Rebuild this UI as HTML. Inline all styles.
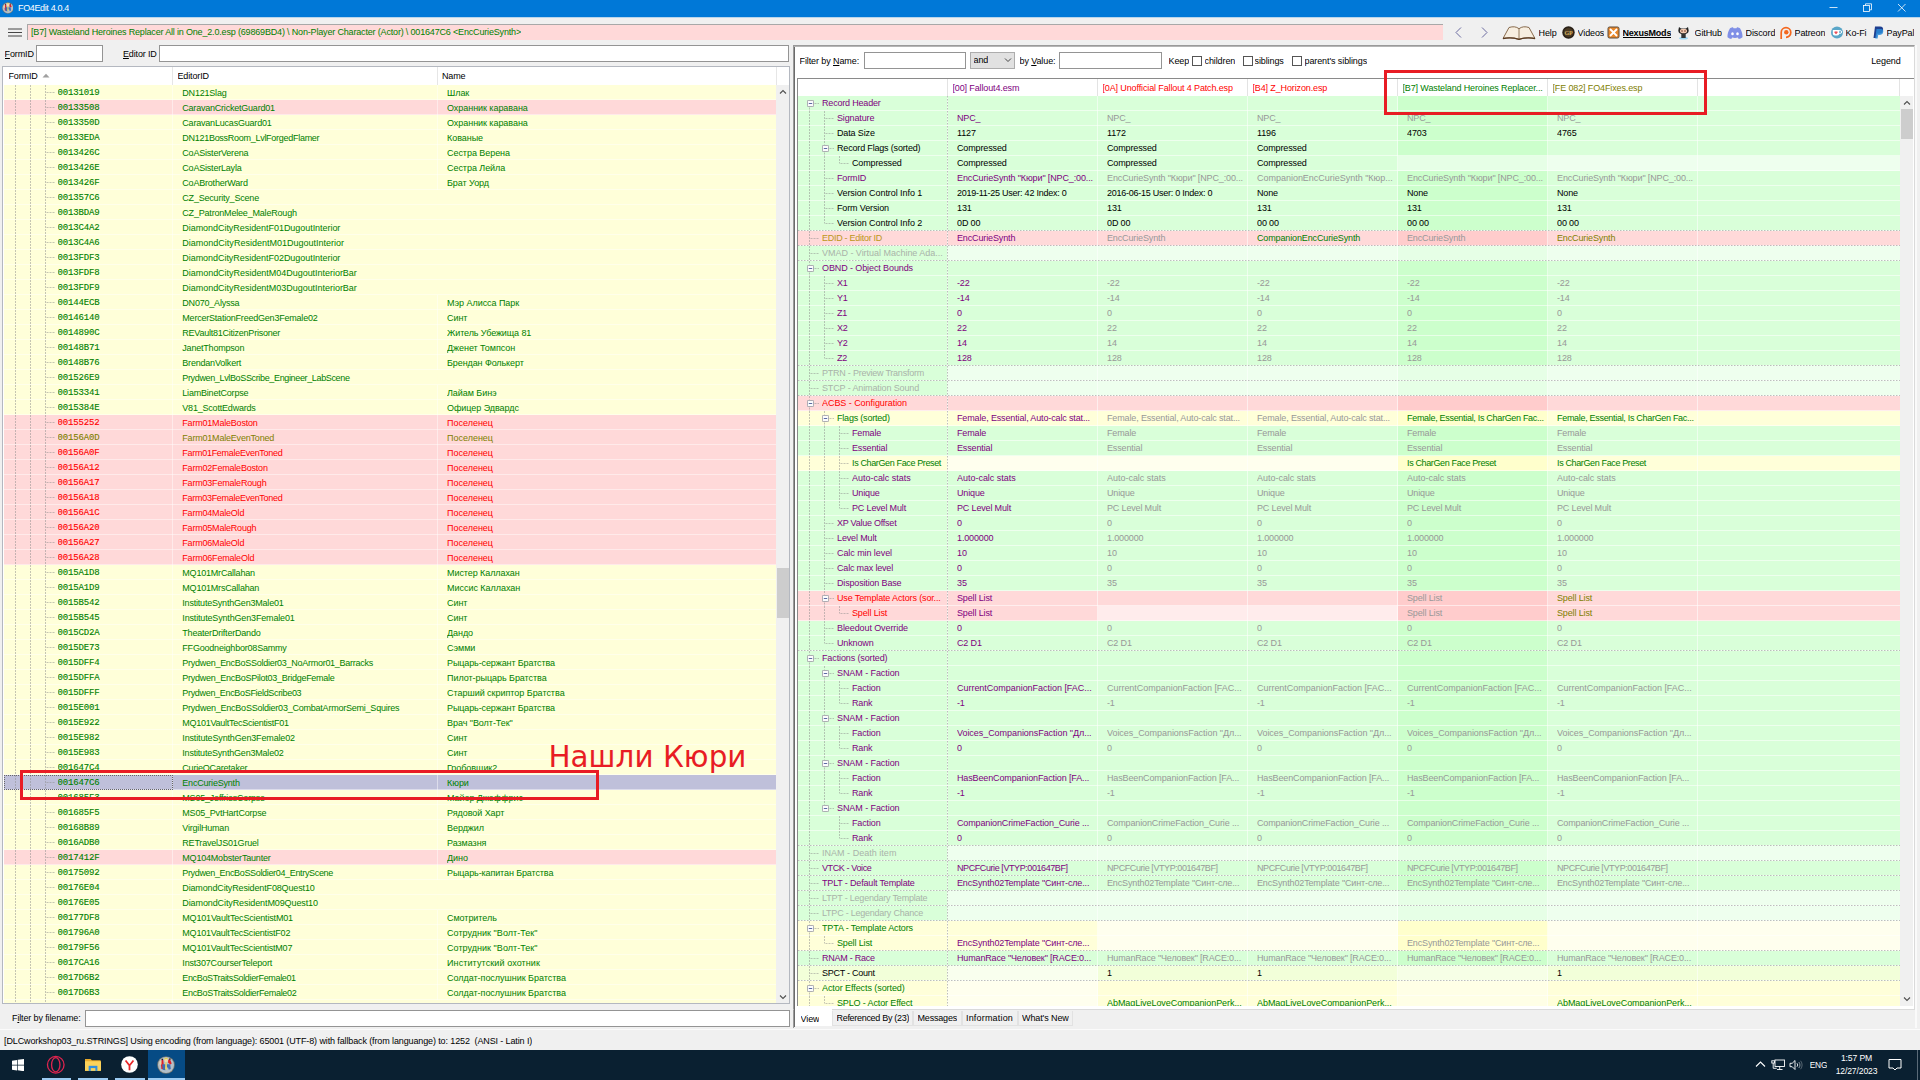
<!DOCTYPE html><html lang="ru"><head><meta charset="utf-8"><title>FO4Edit 4.0.4</title><style>
*{box-sizing:border-box}
html,body{margin:0;padding:0}
body{width:1920px;height:1080px;overflow:hidden;background:#f0f0f0;position:relative;
 font-family:"Liberation Sans",sans-serif;font-size:9px;letter-spacing:-0.13px;color:#000;line-height:15px;-webkit-font-smoothing:antialiased}
.a{position:absolute}
.t{position:absolute;white-space:nowrap;overflow:hidden;height:15px;line-height:15px}
.m{font-family:"Liberation Mono",monospace;font-size:9px;letter-spacing:-0.15px;-webkit-text-stroke:0.12px currentColor}
.inp{position:absolute;background:#fff;border:1px solid #949494}
.g{color:#008000}.r{color:#ff0000}.o{color:#808000}.p{color:#800080}.k{color:#000}.y{color:#989898}.e{color:#bb9618}.q{color:#a9b3a9}
u{text-decoration-thickness:.7px;text-underline-offset:1.2px}
.row{position:absolute;left:0;height:15px}
.c{position:absolute;top:0;height:15px}
.hl{position:absolute;height:1px;left:0}
</style></head><body>
<div class="a" style="left:0;top:0;width:1920px;height:17px;background:#0078d7"></div>
<div class="a" style="left:0;top:17px;width:1920px;height:1px;background:#b9d5ec"></div>
<svg class="a" style="left:1.500px;top:2px" width="11.800" height="11.800" viewBox="0 0 18 18"><circle cx="9" cy="9" r="8.800" fill="#77766c"/><circle cx="9" cy="9" r="8" fill="#b3bfc9"/><path d="M4.600 3.600l1.600.2.500 4.200-.3 5.200-2-.2-.4-4z" fill="#e01f26"/><path d="M11.300 3.800l1.700-.6 1.700 4.200-1.400 1-2.300-1.800z" fill="#e01f26"/><path d="M4.300 3.300l1-.9.900 1-.8.800zM12 2.900l1-.8.800 1.100-1 .7z" fill="#1c1c1c"/><path d="M2.500 6.200c.5-1.400 1.200-2 1.800-1.700l.2 3.800-1.500.8c-.6-.8-.8-1.800-.5-2.900z" fill="#ecd3a4"/><path d="M5.200 8.200h8l.6 4.800-2 .8-.8-2.200H8.600l-.3 2.600-2.600-.4z" fill="#3f6db3"/><path d="M7.400 2.400c1-.9 2.500-.9 3.300 0l.3 2.600-.9 1.300H8.300l-.9-1.300z" fill="#f2dcae"/><path d="M7.200 2.900c.6-1.300 2.800-1.600 3.800-.2l-.6.700c-.9-.6-1.900-.5-2.700.1z" fill="#e6cf4a"/><path d="M8.300 6.200h1.500l.2 6.800-.9.900-1-.9z" fill="#ecd96a"/></svg>
<div class="t" style="left:18px;top:1px;color:#fff;font-size:9px;letter-spacing:-0.36px">FO4Edit 4.0.4</div>
<svg class="a" style="left:1820px;top:0" width="100" height="17" viewBox="0 0 100 17" fill="none" stroke="#fff" stroke-width="0.8"><path d="M9.5 7.5h8"/><rect x="43.5" y="5.5" width="6" height="6"/><path d="M45.5 5.5v-1.7h6v6h-2"/><path d="M78 4l7.5 7.5M85.5 4l-7.5 7.5"/></svg>
<svg class="a" style="left:8px;top:28px" width="14" height="9" viewBox="0 0 14 9"><path d="M0 1h14M0 4.500h14M0 8h14" stroke="#1a1a1a" stroke-width=".8"/></svg>
<div class="a" style="left:27px;top:24px;width:1416px;height:16px;background:#ffd9d9;border-left:1px solid #a8a8a8;border-top:1px solid #a8a8a8"></div>
<div class="t g" style="left:31px;top:24.5px;font-size:9px;letter-spacing:-0.17px">[B7] Wasteland Heroines Replacer All in One_2.0.esp (69869BD4) \ Non-Player Character (Actor) \ 001647C6 &lt;EncCurieSynth&gt;</div>
<svg class="a" style="left:1450px;top:25px" width="45" height="15" viewBox="0 0 45 15" fill="none" stroke="#6a6aa0" stroke-width="1"><path d="M11 2.5l-5 5 5 5"/><path d="M32 2.5l5 5-5 5"/></svg>
<svg class="a" style="left:1502px;top:25px" width="34" height="15" viewBox="0 0 34 15"><path d="M1 13.5L7 2.5c4-1.2 7-1 10 1.2 3-2.2 6-2.4 10-1.2l6 11c-5-1-10-1-16 .8C11 12.500 6 12.500 1 13.500z" fill="#f7eee0" stroke="#7a5a3a" stroke-width="0.9"/><path d="M17 3.700v10.500" stroke="#7a5a3a" stroke-width="0.8"/><path d="M1 13.500c5-1 10-1 16 .8 6-1.800 11-1.800 16-.8" stroke="#5a3a20" stroke-width="1.300" fill="none"/></svg>
<div class="t" style="left:1538.5px;top:26px;font-size:9px;letter-spacing:-0.1px;">Help</div>
<svg class="a" style="left:1562px;top:26px" width="13" height="13" viewBox="0 0 13 13"><circle cx="6.5" cy="6.5" r="6.2" fill="#2a2118"/><circle cx="6.5" cy="6.5" r="4.6" fill="#4a3a24"/><text x="6.5" y="8.800" font-size="6" font-family="Liberation Serif,serif" font-weight="bold" fill="#d8b060" text-anchor="middle">GP</text></svg>
<div class="t" style="left:1577.5px;top:26px;font-size:9px;letter-spacing:-0.1px;">Videos</div>
<svg class="a" style="left:1607px;top:26px" width="13" height="13" viewBox="0 0 13 13"><rect x="1" y="1" width="11" height="11" rx="1.500" fill="#e8872a" stroke="#5a4a3a" stroke-width="1"/><path d="M3 3l7 7M10 3l-7 7" stroke="#fff" stroke-width="1.800"/><circle cx="6.5" cy="6.5" r="1.300" fill="#fff"/></svg>
<div class="t" style="left:1622.5px;top:26px;font-size:9px;letter-spacing:-0.1px;font-weight:bold;text-decoration:underline;letter-spacing:-0.2px">NexusMods</div>
<svg class="a" style="left:1677px;top:25px" width="13" height="15" viewBox="0 0 13 15"><ellipse cx="6.5" cy="13.300" rx="4.500" ry="1.200" fill="#9cd7f5"/><path d="M2 2l2 1.500h5L11 2l.7 3.500c0 2.500-2 3.700-5.200 3.700S1.300 8 1.300 5.500z" fill="#222"/><ellipse cx="6.5" cy="6" rx="3.600" ry="2.300" fill="#f4cbb2"/><rect x="4.300" y="9" width="4.400" height="4" fill="#333"/><circle cx="5" cy="6" r=".8" fill="#6a3a2a"/><circle cx="8" cy="6" r=".8" fill="#6a3a2a"/></svg>
<div class="t" style="left:1694.5px;top:26px;font-size:9px;letter-spacing:-0.1px;">GitHub</div>
<svg class="a" style="left:1727px;top:27px" width="16" height="12" viewBox="0 0 16 12"><path d="M3 1.200C4.500.5 5.500.300 6 .3l.5.900h3L10 .3c.5 0 1.500.200 3 .9 1.800 2.800 2.700 6 2.500 9-1.300 1-2.600 1.500-3.800 1.700l-.8-1.400c-1.800.5-4 .5-5.800 0l-.8 1.400C3.100 11.700 1.800 11.200.5 10.200.300 7.200 1.200 4 3 1.200z" fill="#7f8fe6"/><ellipse cx="5.500" cy="6.800" rx="1.300" ry="1.500" fill="#fff"/><ellipse cx="10.500" cy="6.800" rx="1.300" ry="1.500" fill="#fff"/></svg>
<div class="t" style="left:1745.5px;top:26px;font-size:9px;letter-spacing:-0.1px;">Discord</div>
<svg class="a" style="left:1779px;top:26px" width="14" height="14" viewBox="0 0 14 14"><path d="M2.200 13V6.500a4.800 4.800 0 1 1 4.800 4.800" fill="none" stroke="#f4681f" stroke-width="1.700"/><circle cx="7.300" cy="6.300" r="2.200" fill="#f4681f"/></svg>
<div class="t" style="left:1794.5px;top:26px;font-size:9px;letter-spacing:-0.1px;">Patreon</div>
<svg class="a" style="left:1830px;top:26px" width="14" height="13" viewBox="0 0 14 13"><circle cx="7" cy="6.500" r="6" fill="#5aa6c8"/><path d="M2.800 4h6.400v3.500a2 2 0 0 1-2 2H4.800a2 2 0 0 1-2-2z" fill="#fff"/><path d="M9.200 4.600h1a1.400 1.400 0 0 1 0 2.800h-1" fill="none" stroke="#fff" stroke-width="1"/><path d="M6 8.300L4.500 6.800a.9.900 0 0 1 1.500-1 .9.900 0 0 1 1.500 1z" fill="#e8505a"/></svg>
<div class="t" style="left:1845.5px;top:26px;font-size:9px;letter-spacing:-0.1px;">Ko-Fi</div>
<svg class="a" style="left:1873px;top:26px" width="11" height="13" viewBox="0 0 11 13"><path d="M2 .5h5c2.500 0 3.500 1.500 3 3.800-.5 2.500-2.200 3.500-4.500 3.500H4L3.300 12H.5z" fill="#1f3f8f"/><path d="M3.500 3h4.300c2 0 2.800 1.200 2.400 3-.4 2.200-1.900 3-3.800 3H5.200l-.6 3.500H2.200z" fill="#2a8ad8" opacity=".85"/></svg>
<div class="t" style="left:1886.5px;top:26px;font-size:9px;letter-spacing:-0.1px;">PayPal</div>
<div class="t" style="left:4.5px;top:46.5px;font-size:9px;letter-spacing:-0.1px"><u>F</u>ormID</div>
<div class="inp" style="left:36px;top:45px;width:67px;height:17px"></div>
<div class="t" style="left:123px;top:46.5px;font-size:9px;letter-spacing:-0.15px"><u>E</u>ditor ID</div>
<div class="inp" style="left:159px;top:45px;width:630px;height:17px"></div>
<div class="a" style="left:2px;top:66px;width:788px;height:938px;background:#ffffd9;border:1px solid #b4b8c0;overflow:hidden">
<div class="a" style="left:0;top:0;width:786px;height:18px;background:#fff"></div>
<div class="t" style="left:5.5px;top:2px;font-size:9px">FormID</div>
<svg class="a" style="left:39px;top:6px" width="8" height="5" viewBox="0 0 8 5"><path d="M0.5 4.500L4 .8l3.500 3.700z" fill="#a0a0a0"/></svg>
<div class="t" style="left:174.5px;top:2px;font-size:9px">EditorID</div>
<div class="t" style="left:439px;top:2px;font-size:9px">Name</div>
<div class="a" style="left:169px;top:0;width:1px;height:18px;background:#e6e6e6"></div>
<div class="a" style="left:434px;top:0;width:1px;height:18px;background:#e6e6e6"></div>
<div class="a" style="left:773px;top:0;width:1px;height:18px;background:#e6e6e6"></div>
<div class="row g" style="top:18px;width:773px;background:#ffffd9"><span class="t m" style="left:54.5px;top:1px">00131019</span><span class="t" style="left:179.3px;top:1px;width:254px;letter-spacing:-0.2px">DN121Slag</span><span class="t" style="left:444px;top:1px;width:325px;letter-spacing:-0.05px">Шлак</span></div>
<div class="row g" style="top:33px;width:773px;background:#ffd9d9"><span class="t m" style="left:54.5px;top:1px">00133508</span><span class="t" style="left:179.3px;top:1px;width:254px;letter-spacing:-0.216px">CaravanCricketGuard01</span><span class="t" style="left:444px;top:1px;width:325px;letter-spacing:-0.05px">Охранник каравана</span></div>
<div class="row g" style="top:48px;width:773px;background:#ffffd9"><span class="t m" style="left:54.5px;top:1px">0013350D</span><span class="t" style="left:179.3px;top:1px;width:254px;letter-spacing:-0.2px">CaravanLucasGuard01</span><span class="t" style="left:444px;top:1px;width:325px;letter-spacing:-0.05px">Охранник каравана</span></div>
<div class="row g" style="top:63px;width:773px;background:#ffffd9"><span class="t m" style="left:54.5px;top:1px">00133EDA</span><span class="t" style="left:179.3px;top:1px;width:254px;letter-spacing:-0.278px">DN121BossRoom_LvlForgedFlamer</span><span class="t" style="left:444px;top:1px;width:325px;letter-spacing:-0.05px">Кованые</span></div>
<div class="row g" style="top:78px;width:773px;background:#ffffd9"><span class="t m" style="left:54.5px;top:1px">0013426C</span><span class="t" style="left:179.3px;top:1px;width:254px;letter-spacing:-0.2px">CoASisterVerena</span><span class="t" style="left:444px;top:1px;width:325px;letter-spacing:-0.05px">Сестра Верена</span></div>
<div class="row g" style="top:93px;width:773px;background:#ffffd9"><span class="t m" style="left:54.5px;top:1px">0013426E</span><span class="t" style="left:179.3px;top:1px;width:254px;letter-spacing:-0.2px">CoASisterLayla</span><span class="t" style="left:444px;top:1px;width:325px;letter-spacing:-0.05px">Сестра Лейла</span></div>
<div class="row g" style="top:108px;width:773px;background:#ffffd9"><span class="t m" style="left:54.5px;top:1px">0013426F</span><span class="t" style="left:179.3px;top:1px;width:254px;letter-spacing:-0.2px">CoABrotherWard</span><span class="t" style="left:444px;top:1px;width:325px;letter-spacing:-0.05px">Брат Уорд</span></div>
<div class="row g" style="top:123px;width:773px;background:#ffffd9"><span class="t m" style="left:54.5px;top:1px">001357C6</span><span class="t" style="left:179.3px;top:1px;width:254px;letter-spacing:-0.2px">CZ_Security_Scene</span></div>
<div class="row g" style="top:138px;width:773px;background:#ffffd9"><span class="t m" style="left:54.5px;top:1px">0013BDA9</span><span class="t" style="left:179.3px;top:1px;width:254px;letter-spacing:-0.19px">CZ_PatronMelee_MaleRough</span></div>
<div class="row g" style="top:153px;width:773px;background:#ffffd9"><span class="t m" style="left:54.5px;top:1px">0013C4A2</span><span class="t" style="left:179.3px;top:1px;width:254px;letter-spacing:-0.044px">DiamondCityResidentF01DugoutInterior</span></div>
<div class="row g" style="top:168px;width:773px;background:#ffffd9"><span class="t m" style="left:54.5px;top:1px">0013C4A6</span><span class="t" style="left:179.3px;top:1px;width:254px;letter-spacing:0.006px">DiamondCityResidentM01DugoutInterior</span></div>
<div class="row g" style="top:183px;width:773px;background:#ffffd9"><span class="t m" style="left:54.5px;top:1px">0013FDF3</span><span class="t" style="left:179.3px;top:1px;width:254px;letter-spacing:-0.044px">DiamondCityResidentF02DugoutInterior</span></div>
<div class="row g" style="top:198px;width:773px;background:#ffffd9"><span class="t m" style="left:54.5px;top:1px">0013FDF8</span><span class="t" style="left:179.3px;top:1px;width:254px;letter-spacing:-0.028px">DiamondCityResidentM04DugoutInteriorBar</span></div>
<div class="row g" style="top:213px;width:773px;background:#ffffd9"><span class="t m" style="left:54.5px;top:1px">0013FDF9</span><span class="t" style="left:179.3px;top:1px;width:254px;letter-spacing:-0.028px">DiamondCityResidentM03DugoutInteriorBar</span></div>
<div class="row g" style="top:228px;width:773px;background:#ffffd9"><span class="t m" style="left:54.5px;top:1px">00144ECB</span><span class="t" style="left:179.3px;top:1px;width:254px;letter-spacing:-0.2px">DN070_Alyssa</span><span class="t" style="left:444px;top:1px;width:325px;letter-spacing:-0.05px">Мэр Алисса Парк</span></div>
<div class="row g" style="top:243px;width:773px;background:#ffffd9"><span class="t m" style="left:54.5px;top:1px">00146140</span><span class="t" style="left:179.3px;top:1px;width:254px;letter-spacing:-0.212px">MercerStationFreedGen3Female02</span><span class="t" style="left:444px;top:1px;width:325px;letter-spacing:-0.05px">Синт</span></div>
<div class="row g" style="top:258px;width:773px;background:#ffffd9"><span class="t m" style="left:54.5px;top:1px">0014890C</span><span class="t" style="left:179.3px;top:1px;width:254px;letter-spacing:-0.237px">REVault81CitizenPrisoner</span><span class="t" style="left:444px;top:1px;width:325px;letter-spacing:-0.103px">Житель Убежища 81</span></div>
<div class="row g" style="top:273px;width:773px;background:#ffffd9"><span class="t m" style="left:54.5px;top:1px">00148B71</span><span class="t" style="left:179.3px;top:1px;width:254px;letter-spacing:-0.2px">JanetThompson</span><span class="t" style="left:444px;top:1px;width:325px;letter-spacing:-0.05px">Дженет Томпсон</span></div>
<div class="row g" style="top:288px;width:773px;background:#ffffd9"><span class="t m" style="left:54.5px;top:1px">00148B76</span><span class="t" style="left:179.3px;top:1px;width:254px;letter-spacing:-0.2px">BrendanVolkert</span><span class="t" style="left:444px;top:1px;width:325px;letter-spacing:-0.092px">Брендан Фолькерт</span></div>
<div class="row g" style="top:303px;width:773px;background:#ffffd9"><span class="t m" style="left:54.5px;top:1px">001526E9</span><span class="t" style="left:179.3px;top:1px;width:254px;letter-spacing:-0.351px">Prydwen_LvlBoSScribe_Engineer_LabScene</span></div>
<div class="row g" style="top:318px;width:773px;background:#ffffd9"><span class="t m" style="left:54.5px;top:1px">00153341</span><span class="t" style="left:179.3px;top:1px;width:254px;letter-spacing:-0.2px">LiamBinetCorpse</span><span class="t" style="left:444px;top:1px;width:325px;letter-spacing:-0.05px">Лайам Бинэ</span></div>
<div class="row g" style="top:333px;width:773px;background:#ffffd9"><span class="t m" style="left:54.5px;top:1px">0015384E</span><span class="t" style="left:179.3px;top:1px;width:254px;letter-spacing:-0.2px">V81_ScottEdwards</span><span class="t" style="left:444px;top:1px;width:325px;letter-spacing:-0.05px">Офицер Эдвардс</span></div>
<div class="row r" style="top:348px;width:773px;background:#ffd9d9"><span class="t m" style="left:54.5px;top:1px">00155252</span><span class="t" style="left:179.3px;top:1px;width:254px;letter-spacing:-0.2px">Farm01MaleBoston</span><span class="t" style="left:444px;top:1px;width:325px;letter-spacing:-0.008px">Поселенец</span></div>
<div class="row o" style="top:363px;width:773px;background:#ffd9d9"><span class="t m" style="left:54.5px;top:1px">00156A0D</span><span class="t" style="left:179.3px;top:1px;width:254px;letter-spacing:-0.2px">Farm01MaleEvenToned</span><span class="t" style="left:444px;top:1px;width:325px;letter-spacing:-0.008px">Поселенец</span></div>
<div class="row r" style="top:378px;width:773px;background:#ffd9d9"><span class="t m" style="left:54.5px;top:1px">00156A0F</span><span class="t" style="left:179.3px;top:1px;width:254px;letter-spacing:-0.279px">Farm01FemaleEvenToned</span><span class="t" style="left:444px;top:1px;width:325px;letter-spacing:-0.008px">Поселенец</span></div>
<div class="row r" style="top:393px;width:773px;background:#ffd9d9"><span class="t m" style="left:54.5px;top:1px">00156A12</span><span class="t" style="left:179.3px;top:1px;width:254px;letter-spacing:-0.2px">Farm02FemaleBoston</span><span class="t" style="left:444px;top:1px;width:325px;letter-spacing:-0.008px">Поселенец</span></div>
<div class="row r" style="top:408px;width:773px;background:#ffd9d9"><span class="t m" style="left:54.5px;top:1px">00156A17</span><span class="t" style="left:179.3px;top:1px;width:254px;letter-spacing:-0.2px">Farm03FemaleRough</span><span class="t" style="left:444px;top:1px;width:325px;letter-spacing:-0.008px">Поселенец</span></div>
<div class="row r" style="top:423px;width:773px;background:#ffd9d9"><span class="t m" style="left:54.5px;top:1px">00156A18</span><span class="t" style="left:179.3px;top:1px;width:254px;letter-spacing:-0.279px">Farm03FemaleEvenToned</span><span class="t" style="left:444px;top:1px;width:325px;letter-spacing:-0.008px">Поселенец</span></div>
<div class="row r" style="top:438px;width:773px;background:#ffd9d9"><span class="t m" style="left:54.5px;top:1px">00156A1C</span><span class="t" style="left:179.3px;top:1px;width:254px;letter-spacing:-0.2px">Farm04MaleOld</span><span class="t" style="left:444px;top:1px;width:325px;letter-spacing:-0.008px">Поселенец</span></div>
<div class="row r" style="top:453px;width:773px;background:#ffd9d9"><span class="t m" style="left:54.5px;top:1px">00156A20</span><span class="t" style="left:179.3px;top:1px;width:254px;letter-spacing:-0.2px">Farm05MaleRough</span><span class="t" style="left:444px;top:1px;width:325px;letter-spacing:-0.008px">Поселенец</span></div>
<div class="row r" style="top:468px;width:773px;background:#ffd9d9"><span class="t m" style="left:54.5px;top:1px">00156A27</span><span class="t" style="left:179.3px;top:1px;width:254px;letter-spacing:-0.2px">Farm06MaleOld</span><span class="t" style="left:444px;top:1px;width:325px;letter-spacing:-0.008px">Поселенец</span></div>
<div class="row r" style="top:483px;width:773px;background:#ffd9d9"><span class="t m" style="left:54.5px;top:1px">00156A28</span><span class="t" style="left:179.3px;top:1px;width:254px;letter-spacing:-0.2px">Farm06FemaleOld</span><span class="t" style="left:444px;top:1px;width:325px;letter-spacing:-0.008px">Поселенец</span></div>
<div class="row g" style="top:498px;width:773px;background:#ffffd9"><span class="t m" style="left:54.5px;top:1px">0015A1D8</span><span class="t" style="left:179.3px;top:1px;width:254px;letter-spacing:-0.2px">MQ101MrCallahan</span><span class="t" style="left:444px;top:1px;width:325px;letter-spacing:-0.073px">Мистер Каллахан</span></div>
<div class="row g" style="top:513px;width:773px;background:#ffffd9"><span class="t m" style="left:54.5px;top:1px">0015A1D9</span><span class="t" style="left:179.3px;top:1px;width:254px;letter-spacing:-0.2px">MQ101MrsCallahan</span><span class="t" style="left:444px;top:1px;width:325px;letter-spacing:-0.026px">Миссис Каллахан</span></div>
<div class="row g" style="top:528px;width:773px;background:#ffffd9"><span class="t m" style="left:54.5px;top:1px">0015B542</span><span class="t" style="left:179.3px;top:1px;width:254px;letter-spacing:-0.2px">InstituteSynthGen3Male01</span><span class="t" style="left:444px;top:1px;width:325px;letter-spacing:-0.05px">Синт</span></div>
<div class="row g" style="top:543px;width:773px;background:#ffffd9"><span class="t m" style="left:54.5px;top:1px">0015B545</span><span class="t" style="left:179.3px;top:1px;width:254px;letter-spacing:-0.164px">InstituteSynthGen3Female01</span><span class="t" style="left:444px;top:1px;width:325px;letter-spacing:-0.05px">Синт</span></div>
<div class="row g" style="top:558px;width:773px;background:#ffffd9"><span class="t m" style="left:54.5px;top:1px">0015CD2A</span><span class="t" style="left:179.3px;top:1px;width:254px;letter-spacing:-0.2px">TheaterDrifterDando</span><span class="t" style="left:444px;top:1px;width:325px;letter-spacing:-0.05px">Дандо</span></div>
<div class="row g" style="top:573px;width:773px;background:#ffffd9"><span class="t m" style="left:54.5px;top:1px">0015DE73</span><span class="t" style="left:179.3px;top:1px;width:254px;letter-spacing:-0.2px">FFGoodneighbor08Sammy</span><span class="t" style="left:444px;top:1px;width:325px;letter-spacing:-0.05px">Сэмми</span></div>
<div class="row g" style="top:588px;width:773px;background:#ffffd9"><span class="t m" style="left:54.5px;top:1px">0015DFF4</span><span class="t" style="left:179.3px;top:1px;width:254px;letter-spacing:-0.274px">Prydwen_EncBoSSoldier03_NoArmor01_Barracks</span><span class="t" style="left:444px;top:1px;width:325px;letter-spacing:-0.109px">Рыцарь-сержант Братства</span></div>
<div class="row g" style="top:603px;width:773px;background:#ffffd9"><span class="t m" style="left:54.5px;top:1px">0015DFFA</span><span class="t" style="left:179.3px;top:1px;width:254px;letter-spacing:-0.259px">Prydwen_EncBoSPilot03_BridgeFemale</span><span class="t" style="left:444px;top:1px;width:325px;letter-spacing:-0.045px">Пилот-рыцарь Братства</span></div>
<div class="row g" style="top:618px;width:773px;background:#ffffd9"><span class="t m" style="left:54.5px;top:1px">0015DFFF</span><span class="t" style="left:179.3px;top:1px;width:254px;letter-spacing:-0.317px">Prydwen_EncBoSFieldScribe03</span><span class="t" style="left:444px;top:1px;width:325px;letter-spacing:-0.025px">Старший скриптор Братства</span></div>
<div class="row g" style="top:633px;width:773px;background:#ffffd9"><span class="t m" style="left:54.5px;top:1px">0015E001</span><span class="t" style="left:179.3px;top:1px;width:254px;letter-spacing:-0.226px">Prydwen_EncBoSSoldier03_CombatArmorSemi_Squires</span><span class="t" style="left:444px;top:1px;width:325px;letter-spacing:-0.109px">Рыцарь-сержант Братства</span></div>
<div class="row g" style="top:648px;width:773px;background:#ffffd9"><span class="t m" style="left:54.5px;top:1px">0015E922</span><span class="t" style="left:179.3px;top:1px;width:254px;letter-spacing:-0.256px">MQ101VaultTecScientistF01</span><span class="t" style="left:444px;top:1px;width:325px;letter-spacing:-0.05px">Врач "Волт-Тек"</span></div>
<div class="row g" style="top:663px;width:773px;background:#ffffd9"><span class="t m" style="left:54.5px;top:1px">0015E982</span><span class="t" style="left:179.3px;top:1px;width:254px;letter-spacing:-0.153px">InstituteSynthGen3Female02</span><span class="t" style="left:444px;top:1px;width:325px;letter-spacing:-0.05px">Синт</span></div>
<div class="row g" style="top:678px;width:773px;background:#ffffd9"><span class="t m" style="left:54.5px;top:1px">0015E983</span><span class="t" style="left:179.3px;top:1px;width:254px;letter-spacing:-0.2px">InstituteSynthGen3Male02</span><span class="t" style="left:444px;top:1px;width:325px;letter-spacing:-0.05px">Синт</span></div>
<div class="row g" style="top:693px;width:773px;background:#ffffd9"><span class="t m" style="left:54.5px;top:1px">001647C4</span><span class="t" style="left:179.3px;top:1px;width:254px;letter-spacing:-0.2px">CurieQCaretaker</span><span class="t" style="left:444px;top:1px;width:325px;letter-spacing:-0.05px">Гробовщик2</span></div>
<div class="row g" style="top:708px;width:773px;background:#bfc0da"><span class="t m" style="left:54.5px;top:1px">001647C6</span><span class="t" style="left:179.3px;top:1px;width:254px;letter-spacing:-0.2px">EncCurieSynth</span><span class="t" style="left:444px;top:1px;width:325px;letter-spacing:-0.05px">Кюри</span></div>
<div class="row g" style="top:723px;width:773px;background:#ffffd9"><span class="t m" style="left:54.5px;top:1px">001685F3</span><span class="t" style="left:179.3px;top:1px;width:254px;letter-spacing:-0.2px">MS05_JeffriesCorpse</span><span class="t" style="left:444px;top:1px;width:325px;letter-spacing:-0.05px">Майор Джеффрис</span></div>
<div class="row g" style="top:738px;width:773px;background:#ffffd9"><span class="t m" style="left:54.5px;top:1px">001685F5</span><span class="t" style="left:179.3px;top:1px;width:254px;letter-spacing:-0.2px">MS05_PvtHartCorpse</span><span class="t" style="left:444px;top:1px;width:325px;letter-spacing:-0.05px">Рядовой Харт</span></div>
<div class="row g" style="top:753px;width:773px;background:#ffffd9"><span class="t m" style="left:54.5px;top:1px">00168B89</span><span class="t" style="left:179.3px;top:1px;width:254px;letter-spacing:-0.2px">VirgilHuman</span><span class="t" style="left:444px;top:1px;width:325px;letter-spacing:-0.05px">Верджил</span></div>
<div class="row g" style="top:768px;width:773px;background:#ffffd9"><span class="t m" style="left:54.5px;top:1px">0016ADB0</span><span class="t" style="left:179.3px;top:1px;width:254px;letter-spacing:-0.2px">RETravelJS01Gruel</span><span class="t" style="left:444px;top:1px;width:325px;letter-spacing:-0.05px">Размазня</span></div>
<div class="row g" style="top:783px;width:773px;background:#ffd9d9"><span class="t m" style="left:54.5px;top:1px">0017412F</span><span class="t" style="left:179.3px;top:1px;width:254px;letter-spacing:-0.2px">MQ104MobsterTaunter</span><span class="t" style="left:444px;top:1px;width:325px;letter-spacing:-0.05px">Дино</span></div>
<div class="row g" style="top:798px;width:773px;background:#ffffd9"><span class="t m" style="left:54.5px;top:1px">00175092</span><span class="t" style="left:179.3px;top:1px;width:254px;letter-spacing:-0.338px">Prydwen_EncBoSSoldier04_EntryScene</span><span class="t" style="left:444px;top:1px;width:325px;letter-spacing:-0.114px">Рыцарь-капитан Братства</span></div>
<div class="row g" style="top:813px;width:773px;background:#ffffd9"><span class="t m" style="left:54.5px;top:1px">00176E04</span><span class="t" style="left:179.3px;top:1px;width:254px;letter-spacing:-0.147px">DiamondCityResidentF08Quest10</span></div>
<div class="row g" style="top:828px;width:773px;background:#ffffd9"><span class="t m" style="left:54.5px;top:1px">00176E05</span><span class="t" style="left:179.3px;top:1px;width:254px;letter-spacing:-0.102px">DiamondCityResidentM09Quest10</span></div>
<div class="row g" style="top:843px;width:773px;background:#ffffd9"><span class="t m" style="left:54.5px;top:1px">00177DF8</span><span class="t" style="left:179.3px;top:1px;width:254px;letter-spacing:-0.172px">MQ101VaultTecScientistM01</span><span class="t" style="left:444px;top:1px;width:325px;letter-spacing:-0.05px">Смотритель</span></div>
<div class="row g" style="top:858px;width:773px;background:#ffffd9"><span class="t m" style="left:54.5px;top:1px">001796A0</span><span class="t" style="left:179.3px;top:1px;width:254px;letter-spacing:-0.2px">MQ101VaultTecScientistF02</span><span class="t" style="left:444px;top:1px;width:325px;letter-spacing:0.039px">Сотрудник "Волт-Тек"</span></div>
<div class="row g" style="top:873px;width:773px;background:#ffffd9"><span class="t m" style="left:54.5px;top:1px">00179F56</span><span class="t" style="left:179.3px;top:1px;width:254px;letter-spacing:-0.2px">MQ101VaultTecScientistM07</span><span class="t" style="left:444px;top:1px;width:325px;letter-spacing:0.039px">Сотрудник "Волт-Тек"</span></div>
<div class="row g" style="top:888px;width:773px;background:#ffffd9"><span class="t m" style="left:54.5px;top:1px">0017CA16</span><span class="t" style="left:179.3px;top:1px;width:254px;letter-spacing:-0.171px">Inst307CourserTeleport</span><span class="t" style="left:444px;top:1px;width:325px;letter-spacing:0.1px">Институтский охотник</span></div>
<div class="row g" style="top:903px;width:773px;background:#ffffd9"><span class="t m" style="left:54.5px;top:1px">0017D6B2</span><span class="t" style="left:179.3px;top:1px;width:254px;letter-spacing:-0.342px">EncBoSTraitsSoldierFemale01</span><span class="t" style="left:444px;top:1px;width:325px;letter-spacing:-0.027px">Солдат-послушник Братства</span></div>
<div class="row g" style="top:918px;width:773px;background:#ffffd9"><span class="t m" style="left:54.5px;top:1px">0017D6B3</span><span class="t" style="left:179.3px;top:1px;width:254px;letter-spacing:-0.319px">EncBoSTraitsSoldierFemale02</span><span class="t" style="left:444px;top:1px;width:325px;letter-spacing:-0.027px">Солдат-послушник Братства</span></div>
<svg class="a" style="left:0;top:18px" width="773" height="918" viewBox="0 0 773 918"><path d="M0 14.5H773" stroke="#fff" stroke-opacity=".45" stroke-width="1"/><path d="M0 29.5H773" stroke="#fff" stroke-opacity=".45" stroke-width="1"/><path d="M0 44.5H773" stroke="#fff" stroke-opacity=".45" stroke-width="1"/><path d="M0 59.5H773" stroke="#fff" stroke-opacity=".45" stroke-width="1"/><path d="M0 74.5H773" stroke="#fff" stroke-opacity=".45" stroke-width="1"/><path d="M0 89.5H773" stroke="#fff" stroke-opacity=".45" stroke-width="1"/><path d="M0 104.5H773" stroke="#fff" stroke-opacity=".45" stroke-width="1"/><path d="M0 119.5H773" stroke="#fff" stroke-opacity=".45" stroke-width="1"/><path d="M0 134.5H773" stroke="#fff" stroke-opacity=".45" stroke-width="1"/><path d="M0 149.5H773" stroke="#fff" stroke-opacity=".45" stroke-width="1"/><path d="M0 164.5H773" stroke="#fff" stroke-opacity=".45" stroke-width="1"/><path d="M0 179.5H773" stroke="#fff" stroke-opacity=".45" stroke-width="1"/><path d="M0 194.5H773" stroke="#fff" stroke-opacity=".45" stroke-width="1"/><path d="M0 209.5H773" stroke="#fff" stroke-opacity=".45" stroke-width="1"/><path d="M0 224.5H773" stroke="#fff" stroke-opacity=".45" stroke-width="1"/><path d="M0 239.5H773" stroke="#fff" stroke-opacity=".45" stroke-width="1"/><path d="M0 254.5H773" stroke="#fff" stroke-opacity=".45" stroke-width="1"/><path d="M0 269.5H773" stroke="#fff" stroke-opacity=".45" stroke-width="1"/><path d="M0 284.5H773" stroke="#fff" stroke-opacity=".45" stroke-width="1"/><path d="M0 299.5H773" stroke="#fff" stroke-opacity=".45" stroke-width="1"/><path d="M0 314.5H773" stroke="#fff" stroke-opacity=".45" stroke-width="1"/><path d="M0 329.5H773" stroke="#fff" stroke-opacity=".45" stroke-width="1"/><path d="M0 344.5H773" stroke="#fff" stroke-opacity=".45" stroke-width="1"/><path d="M0 359.5H773" stroke="#fff" stroke-opacity=".45" stroke-width="1"/><path d="M0 374.5H773" stroke="#fff" stroke-opacity=".45" stroke-width="1"/><path d="M0 389.5H773" stroke="#fff" stroke-opacity=".45" stroke-width="1"/><path d="M0 404.5H773" stroke="#fff" stroke-opacity=".45" stroke-width="1"/><path d="M0 419.5H773" stroke="#fff" stroke-opacity=".45" stroke-width="1"/><path d="M0 434.5H773" stroke="#fff" stroke-opacity=".45" stroke-width="1"/><path d="M0 449.5H773" stroke="#fff" stroke-opacity=".45" stroke-width="1"/><path d="M0 464.5H773" stroke="#fff" stroke-opacity=".45" stroke-width="1"/><path d="M0 479.5H773" stroke="#fff" stroke-opacity=".45" stroke-width="1"/><path d="M0 494.5H773" stroke="#fff" stroke-opacity=".45" stroke-width="1"/><path d="M0 509.5H773" stroke="#fff" stroke-opacity=".45" stroke-width="1"/><path d="M0 524.5H773" stroke="#fff" stroke-opacity=".45" stroke-width="1"/><path d="M0 539.5H773" stroke="#fff" stroke-opacity=".45" stroke-width="1"/><path d="M0 554.5H773" stroke="#fff" stroke-opacity=".45" stroke-width="1"/><path d="M0 569.5H773" stroke="#fff" stroke-opacity=".45" stroke-width="1"/><path d="M0 584.5H773" stroke="#fff" stroke-opacity=".45" stroke-width="1"/><path d="M0 599.5H773" stroke="#fff" stroke-opacity=".45" stroke-width="1"/><path d="M0 614.5H773" stroke="#fff" stroke-opacity=".45" stroke-width="1"/><path d="M0 629.5H773" stroke="#fff" stroke-opacity=".45" stroke-width="1"/><path d="M0 644.5H773" stroke="#fff" stroke-opacity=".45" stroke-width="1"/><path d="M0 659.5H773" stroke="#fff" stroke-opacity=".45" stroke-width="1"/><path d="M0 674.5H773" stroke="#fff" stroke-opacity=".45" stroke-width="1"/><path d="M0 689.5H773" stroke="#fff" stroke-opacity=".45" stroke-width="1"/><path d="M0 704.5H773" stroke="#fff" stroke-opacity=".45" stroke-width="1"/><path d="M0 719.5H773" stroke="#fff" stroke-opacity=".45" stroke-width="1"/><path d="M0 734.5H773" stroke="#fff" stroke-opacity=".45" stroke-width="1"/><path d="M0 749.5H773" stroke="#fff" stroke-opacity=".45" stroke-width="1"/><path d="M0 764.5H773" stroke="#fff" stroke-opacity=".45" stroke-width="1"/><path d="M0 779.5H773" stroke="#fff" stroke-opacity=".45" stroke-width="1"/><path d="M0 794.5H773" stroke="#fff" stroke-opacity=".45" stroke-width="1"/><path d="M0 809.5H773" stroke="#fff" stroke-opacity=".45" stroke-width="1"/><path d="M0 824.5H773" stroke="#fff" stroke-opacity=".45" stroke-width="1"/><path d="M0 839.5H773" stroke="#fff" stroke-opacity=".45" stroke-width="1"/><path d="M0 854.5H773" stroke="#fff" stroke-opacity=".45" stroke-width="1"/><path d="M0 869.5H773" stroke="#fff" stroke-opacity=".45" stroke-width="1"/><path d="M0 884.5H773" stroke="#fff" stroke-opacity=".45" stroke-width="1"/><path d="M0 899.5H773" stroke="#fff" stroke-opacity=".45" stroke-width="1"/><path d="M0 914.5H773" stroke="#fff" stroke-opacity=".45" stroke-width="1"/><path d="M169.5 0V918" stroke="#fff" stroke-opacity=".45" stroke-width="1"/><path d="M434.5 0V15" stroke="#fff" stroke-opacity=".45" stroke-width="1"/><path d="M434.5 15V30" stroke="#fff" stroke-opacity=".45" stroke-width="1"/><path d="M434.5 30V45" stroke="#fff" stroke-opacity=".45" stroke-width="1"/><path d="M434.5 45V60" stroke="#fff" stroke-opacity=".45" stroke-width="1"/><path d="M434.5 60V75" stroke="#fff" stroke-opacity=".45" stroke-width="1"/><path d="M434.5 75V90" stroke="#fff" stroke-opacity=".45" stroke-width="1"/><path d="M434.5 90V105" stroke="#fff" stroke-opacity=".45" stroke-width="1"/><path d="M434.5 210V225" stroke="#fff" stroke-opacity=".45" stroke-width="1"/><path d="M434.5 225V240" stroke="#fff" stroke-opacity=".45" stroke-width="1"/><path d="M434.5 240V255" stroke="#fff" stroke-opacity=".45" stroke-width="1"/><path d="M434.5 255V270" stroke="#fff" stroke-opacity=".45" stroke-width="1"/><path d="M434.5 270V285" stroke="#fff" stroke-opacity=".45" stroke-width="1"/><path d="M434.5 300V315" stroke="#fff" stroke-opacity=".45" stroke-width="1"/><path d="M434.5 315V330" stroke="#fff" stroke-opacity=".45" stroke-width="1"/><path d="M434.5 330V345" stroke="#fff" stroke-opacity=".45" stroke-width="1"/><path d="M434.5 345V360" stroke="#fff" stroke-opacity=".45" stroke-width="1"/><path d="M434.5 360V375" stroke="#fff" stroke-opacity=".45" stroke-width="1"/><path d="M434.5 375V390" stroke="#fff" stroke-opacity=".45" stroke-width="1"/><path d="M434.5 390V405" stroke="#fff" stroke-opacity=".45" stroke-width="1"/><path d="M434.5 405V420" stroke="#fff" stroke-opacity=".45" stroke-width="1"/><path d="M434.5 420V435" stroke="#fff" stroke-opacity=".45" stroke-width="1"/><path d="M434.5 435V450" stroke="#fff" stroke-opacity=".45" stroke-width="1"/><path d="M434.5 450V465" stroke="#fff" stroke-opacity=".45" stroke-width="1"/><path d="M434.5 465V480" stroke="#fff" stroke-opacity=".45" stroke-width="1"/><path d="M434.5 480V495" stroke="#fff" stroke-opacity=".45" stroke-width="1"/><path d="M434.5 495V510" stroke="#fff" stroke-opacity=".45" stroke-width="1"/><path d="M434.5 510V525" stroke="#fff" stroke-opacity=".45" stroke-width="1"/><path d="M434.5 525V540" stroke="#fff" stroke-opacity=".45" stroke-width="1"/><path d="M434.5 540V555" stroke="#fff" stroke-opacity=".45" stroke-width="1"/><path d="M434.5 555V570" stroke="#fff" stroke-opacity=".45" stroke-width="1"/><path d="M434.5 570V585" stroke="#fff" stroke-opacity=".45" stroke-width="1"/><path d="M434.5 585V600" stroke="#fff" stroke-opacity=".45" stroke-width="1"/><path d="M434.5 600V615" stroke="#fff" stroke-opacity=".45" stroke-width="1"/><path d="M434.5 615V630" stroke="#fff" stroke-opacity=".45" stroke-width="1"/><path d="M434.5 630V645" stroke="#fff" stroke-opacity=".45" stroke-width="1"/><path d="M434.5 645V660" stroke="#fff" stroke-opacity=".45" stroke-width="1"/><path d="M434.5 660V675" stroke="#fff" stroke-opacity=".45" stroke-width="1"/><path d="M434.5 675V690" stroke="#fff" stroke-opacity=".45" stroke-width="1"/><path d="M434.5 690V705" stroke="#fff" stroke-opacity=".45" stroke-width="1"/><path d="M434.5 705V720" stroke="#fff" stroke-opacity=".45" stroke-width="1"/><path d="M434.5 720V735" stroke="#fff" stroke-opacity=".45" stroke-width="1"/><path d="M434.5 735V750" stroke="#fff" stroke-opacity=".45" stroke-width="1"/><path d="M434.5 750V765" stroke="#fff" stroke-opacity=".45" stroke-width="1"/><path d="M434.5 765V780" stroke="#fff" stroke-opacity=".45" stroke-width="1"/><path d="M434.5 780V795" stroke="#fff" stroke-opacity=".45" stroke-width="1"/><path d="M434.5 825V840" stroke="#fff" stroke-opacity=".45" stroke-width="1"/><path d="M434.5 840V855" stroke="#fff" stroke-opacity=".45" stroke-width="1"/><path d="M434.5 855V870" stroke="#fff" stroke-opacity=".45" stroke-width="1"/><path d="M434.5 870V885" stroke="#fff" stroke-opacity=".45" stroke-width="1"/><path d="M434.5 885V900" stroke="#fff" stroke-opacity=".45" stroke-width="1"/><path d="M434.5 900V915" stroke="#fff" stroke-opacity=".45" stroke-width="1"/><path d="M12.5 0V918" stroke="#8c8c8c" stroke-opacity=".5" stroke-width="1" stroke-dasharray="2 1"/><path d="M27.5 0V918" stroke="#8c8c8c" stroke-opacity=".5" stroke-width="1" stroke-dasharray="2 1"/><path d="M42.5 0V918" stroke="#8c8c8c" stroke-opacity=".5" stroke-width="1" stroke-dasharray="2 1"/><path d="M43.5 7.5H52" stroke="#8c8c8c" stroke-opacity=".5" stroke-width="1" stroke-dasharray="2 1"/><path d="M43.5 22.5H52" stroke="#8c8c8c" stroke-opacity=".5" stroke-width="1" stroke-dasharray="2 1"/><path d="M43.5 37.5H52" stroke="#8c8c8c" stroke-opacity=".5" stroke-width="1" stroke-dasharray="2 1"/><path d="M43.5 52.5H52" stroke="#8c8c8c" stroke-opacity=".5" stroke-width="1" stroke-dasharray="2 1"/><path d="M43.5 67.5H52" stroke="#8c8c8c" stroke-opacity=".5" stroke-width="1" stroke-dasharray="2 1"/><path d="M43.5 82.5H52" stroke="#8c8c8c" stroke-opacity=".5" stroke-width="1" stroke-dasharray="2 1"/><path d="M43.5 97.5H52" stroke="#8c8c8c" stroke-opacity=".5" stroke-width="1" stroke-dasharray="2 1"/><path d="M43.5 112.5H52" stroke="#8c8c8c" stroke-opacity=".5" stroke-width="1" stroke-dasharray="2 1"/><path d="M43.5 127.5H52" stroke="#8c8c8c" stroke-opacity=".5" stroke-width="1" stroke-dasharray="2 1"/><path d="M43.5 142.5H52" stroke="#8c8c8c" stroke-opacity=".5" stroke-width="1" stroke-dasharray="2 1"/><path d="M43.5 157.5H52" stroke="#8c8c8c" stroke-opacity=".5" stroke-width="1" stroke-dasharray="2 1"/><path d="M43.5 172.5H52" stroke="#8c8c8c" stroke-opacity=".5" stroke-width="1" stroke-dasharray="2 1"/><path d="M43.5 187.5H52" stroke="#8c8c8c" stroke-opacity=".5" stroke-width="1" stroke-dasharray="2 1"/><path d="M43.5 202.5H52" stroke="#8c8c8c" stroke-opacity=".5" stroke-width="1" stroke-dasharray="2 1"/><path d="M43.5 217.5H52" stroke="#8c8c8c" stroke-opacity=".5" stroke-width="1" stroke-dasharray="2 1"/><path d="M43.5 232.5H52" stroke="#8c8c8c" stroke-opacity=".5" stroke-width="1" stroke-dasharray="2 1"/><path d="M43.5 247.5H52" stroke="#8c8c8c" stroke-opacity=".5" stroke-width="1" stroke-dasharray="2 1"/><path d="M43.5 262.5H52" stroke="#8c8c8c" stroke-opacity=".5" stroke-width="1" stroke-dasharray="2 1"/><path d="M43.5 277.5H52" stroke="#8c8c8c" stroke-opacity=".5" stroke-width="1" stroke-dasharray="2 1"/><path d="M43.5 292.5H52" stroke="#8c8c8c" stroke-opacity=".5" stroke-width="1" stroke-dasharray="2 1"/><path d="M43.5 307.5H52" stroke="#8c8c8c" stroke-opacity=".5" stroke-width="1" stroke-dasharray="2 1"/><path d="M43.5 322.5H52" stroke="#8c8c8c" stroke-opacity=".5" stroke-width="1" stroke-dasharray="2 1"/><path d="M43.5 337.5H52" stroke="#8c8c8c" stroke-opacity=".5" stroke-width="1" stroke-dasharray="2 1"/><path d="M43.5 352.5H52" stroke="#8c8c8c" stroke-opacity=".5" stroke-width="1" stroke-dasharray="2 1"/><path d="M43.5 367.5H52" stroke="#8c8c8c" stroke-opacity=".5" stroke-width="1" stroke-dasharray="2 1"/><path d="M43.5 382.5H52" stroke="#8c8c8c" stroke-opacity=".5" stroke-width="1" stroke-dasharray="2 1"/><path d="M43.5 397.5H52" stroke="#8c8c8c" stroke-opacity=".5" stroke-width="1" stroke-dasharray="2 1"/><path d="M43.5 412.5H52" stroke="#8c8c8c" stroke-opacity=".5" stroke-width="1" stroke-dasharray="2 1"/><path d="M43.5 427.5H52" stroke="#8c8c8c" stroke-opacity=".5" stroke-width="1" stroke-dasharray="2 1"/><path d="M43.5 442.5H52" stroke="#8c8c8c" stroke-opacity=".5" stroke-width="1" stroke-dasharray="2 1"/><path d="M43.5 457.5H52" stroke="#8c8c8c" stroke-opacity=".5" stroke-width="1" stroke-dasharray="2 1"/><path d="M43.5 472.5H52" stroke="#8c8c8c" stroke-opacity=".5" stroke-width="1" stroke-dasharray="2 1"/><path d="M43.5 487.5H52" stroke="#8c8c8c" stroke-opacity=".5" stroke-width="1" stroke-dasharray="2 1"/><path d="M43.5 502.5H52" stroke="#8c8c8c" stroke-opacity=".5" stroke-width="1" stroke-dasharray="2 1"/><path d="M43.5 517.5H52" stroke="#8c8c8c" stroke-opacity=".5" stroke-width="1" stroke-dasharray="2 1"/><path d="M43.5 532.5H52" stroke="#8c8c8c" stroke-opacity=".5" stroke-width="1" stroke-dasharray="2 1"/><path d="M43.5 547.5H52" stroke="#8c8c8c" stroke-opacity=".5" stroke-width="1" stroke-dasharray="2 1"/><path d="M43.5 562.5H52" stroke="#8c8c8c" stroke-opacity=".5" stroke-width="1" stroke-dasharray="2 1"/><path d="M43.5 577.5H52" stroke="#8c8c8c" stroke-opacity=".5" stroke-width="1" stroke-dasharray="2 1"/><path d="M43.5 592.5H52" stroke="#8c8c8c" stroke-opacity=".5" stroke-width="1" stroke-dasharray="2 1"/><path d="M43.5 607.5H52" stroke="#8c8c8c" stroke-opacity=".5" stroke-width="1" stroke-dasharray="2 1"/><path d="M43.5 622.5H52" stroke="#8c8c8c" stroke-opacity=".5" stroke-width="1" stroke-dasharray="2 1"/><path d="M43.5 637.5H52" stroke="#8c8c8c" stroke-opacity=".5" stroke-width="1" stroke-dasharray="2 1"/><path d="M43.5 652.5H52" stroke="#8c8c8c" stroke-opacity=".5" stroke-width="1" stroke-dasharray="2 1"/><path d="M43.5 667.5H52" stroke="#8c8c8c" stroke-opacity=".5" stroke-width="1" stroke-dasharray="2 1"/><path d="M43.5 682.5H52" stroke="#8c8c8c" stroke-opacity=".5" stroke-width="1" stroke-dasharray="2 1"/><path d="M43.5 697.5H52" stroke="#8c8c8c" stroke-opacity=".5" stroke-width="1" stroke-dasharray="2 1"/><path d="M43.5 712.5H52" stroke="#8c8c8c" stroke-opacity=".5" stroke-width="1" stroke-dasharray="2 1"/><path d="M43.5 727.5H52" stroke="#8c8c8c" stroke-opacity=".5" stroke-width="1" stroke-dasharray="2 1"/><path d="M43.5 742.5H52" stroke="#8c8c8c" stroke-opacity=".5" stroke-width="1" stroke-dasharray="2 1"/><path d="M43.5 757.5H52" stroke="#8c8c8c" stroke-opacity=".5" stroke-width="1" stroke-dasharray="2 1"/><path d="M43.5 772.5H52" stroke="#8c8c8c" stroke-opacity=".5" stroke-width="1" stroke-dasharray="2 1"/><path d="M43.5 787.5H52" stroke="#8c8c8c" stroke-opacity=".5" stroke-width="1" stroke-dasharray="2 1"/><path d="M43.5 802.5H52" stroke="#8c8c8c" stroke-opacity=".5" stroke-width="1" stroke-dasharray="2 1"/><path d="M43.5 817.5H52" stroke="#8c8c8c" stroke-opacity=".5" stroke-width="1" stroke-dasharray="2 1"/><path d="M43.5 832.5H52" stroke="#8c8c8c" stroke-opacity=".5" stroke-width="1" stroke-dasharray="2 1"/><path d="M43.5 847.5H52" stroke="#8c8c8c" stroke-opacity=".5" stroke-width="1" stroke-dasharray="2 1"/><path d="M43.5 862.5H52" stroke="#8c8c8c" stroke-opacity=".5" stroke-width="1" stroke-dasharray="2 1"/><path d="M43.5 877.5H52" stroke="#8c8c8c" stroke-opacity=".5" stroke-width="1" stroke-dasharray="2 1"/><path d="M43.5 892.5H52" stroke="#8c8c8c" stroke-opacity=".5" stroke-width="1" stroke-dasharray="2 1"/><path d="M43.5 907.5H52" stroke="#8c8c8c" stroke-opacity=".5" stroke-width="1" stroke-dasharray="2 1"/></svg>
<div class="a" style="left:0;top:18px;width:1px;height:918px;background:#fff"></div>
<div class="a" style="left:1px;top:708px;width:169px;height:15px;border:1px dotted #666"></div>
<div class="a" style="left:773px;top:18px;width:13px;height:919px;background:#f0f0f0"></div>
<div class="a" style="left:774px;top:501px;width:12px;height:50px;background:#cdcdcd"></div>
<svg class="a" style="left:776px;top:22px" width="8" height="6" viewBox="0 0 8 6"><path d="M1 4.500l3-3 3 3" fill="none" stroke="#505050" stroke-width="1.100"/></svg>
<svg class="a" style="left:776px;top:926.7px" width="8" height="6" viewBox="0 0 8 6"><path d="M1 1.500l3 3 3-3" fill="none" stroke="#505050" stroke-width="1.100"/></svg>
</div>
<div class="t" style="left:12px;top:1011px;font-size:9px">F<u>i</u>lter by filename:</div>
<div class="inp" style="left:85px;top:1009.500px;width:705px;height:17px"></div>
<div class="a" style="left:0;top:1029px;width:1920px;height:1px;background:#fbfbfb"></div>
<div class="t" style="left:4px;top:1033.700px;font-size:9px;letter-spacing:-0.12px;white-space:pre">[DLCworkshop03_ru.STRINGS] Using encoding (from language): 65001 (UTF-8) with fallback (from languange) to: 1252  (ANSI - Latin I)</div>
<div class="a" style="left:793px;top:45px;width:1122px;height:965px;background:#fff;border-left:1px solid #9a9a9a;border-top:1px solid #9a9a9a;border-right:1px solid #dadada;border-bottom:1px solid #dadada"></div>
<div class="a" style="left:794px;top:46px;width:1px;height:981px;background:#6b6b6b"></div>
<div class="a" style="left:794px;top:46px;width:1120px;height:1px;background:#b5b5b5"></div>
<div class="a" style="left:1915px;top:45px;width:1.500px;height:983px;background:#fafafa"></div>
<div class="a" style="left:793px;top:1010px;width:1px;height:18px;background:#9a9a9a"></div>
<div class="t" style="left:799.5px;top:53.9px;font-size:9px;letter-spacing:-0.1px;">Filter by <u>N</u>ame:</div>
<div class="inp" style="left:864px;top:52px;width:102px;height:17px"></div>
<div class="a" style="left:970px;top:52px;width:45px;height:17px;background:#e1e1e1;border:1px solid #adadad"></div>
<div class="t" style="left:973.5px;top:52.5px;font-size:9px;letter-spacing:-0.1px;">and</div>
<svg class="a" style="left:1004px;top:57px" width="8" height="6" viewBox="0 0 8 6"><path d="M1 1.500l3 3 3-3" fill="none" stroke="#444" stroke-width="1"/></svg>
<div class="t" style="left:1019.5px;top:53.9px;font-size:9px;letter-spacing:-0.1px;">by <u>V</u>alue:</div>
<div class="inp" style="left:1059px;top:52px;width:103px;height:17px"></div>
<div class="t" style="left:1168.5px;top:53.9px;font-size:9px;letter-spacing:-0.1px;">Keep</div>
<div class="a" style="left:1192px;top:55.5px;width:10px;height:10px;background:#fff;border:1px solid #555"></div>
<div class="a" style="left:1242.5px;top:55.5px;width:10px;height:10px;background:#fff;border:1px solid #555"></div>
<div class="a" style="left:1292px;top:55.5px;width:10px;height:10px;background:#fff;border:1px solid #555"></div>
<div class="t" style="left:1204.5px;top:53.9px;font-size:9px;letter-spacing:-0.1px;">children</div>
<div class="t" style="left:1254.5px;top:53.9px;font-size:9px;letter-spacing:-0.1px;">siblings</div>
<div class="t" style="left:1304.5px;top:53.9px;font-size:9px;letter-spacing:-0.1px;">parent's siblings</div>
<div class="t" style="left:1871.2px;top:54.2px;font-size:9px;letter-spacing:-0.1px;">Legend</div>
<div class="a" style="left:797px;top:78px;width:1116.5px;height:928px;background:#fff;border-left:1px solid #8a8a8a;border-top:1px solid #8a8a8a;overflow:hidden">
<div class="t p" style="left:154.5px;top:1.5px;width:144px">[00] Fallout4.esm</div>
<div class="t r" style="left:304.5px;top:1.5px;width:144px">[0A] Unofficial Fallout 4 Patch.esp</div>
<div class="t r" style="left:454.5px;top:1.5px;width:144px">[B4] Z_Horizon.esp</div>
<div class="t g" style="left:604.5px;top:1.5px;width:144px">[B7] Wasteland Heroines Replacer...</div>
<div class="t o" style="left:754.5px;top:1.5px;width:144px">[FE 082] FO4Fixes.esp</div>
<div class="a" style="left:149px;top:0;width:1px;height:17px;background:#e3e3e3"></div>
<div class="a" style="left:299px;top:0;width:1px;height:17px;background:#e3e3e3"></div>
<div class="a" style="left:449px;top:0;width:1px;height:17px;background:#e3e3e3"></div>
<div class="a" style="left:599px;top:0;width:1px;height:17px;background:#e3e3e3"></div>
<div class="a" style="left:749px;top:0;width:1px;height:17px;background:#e3e3e3"></div>
<div class="a" style="left:899px;top:0;width:1px;height:17px;background:#e3e3e3"></div>
<div class="a" style="left:1101px;top:0;width:1px;height:17px;background:#e3e3e3"></div>
<div class="row" style="top:17px;width:1102px;background:#d9ffd9"><span class="c" style="left:0;width:150px;background:#d9ffd9"></span><span class="t p" style="left:24px;top:.2px;width:125px;letter-spacing:-0.187px">Record Header</span><span class="c" style="left:150px;width:150px;background:#d9ffd9"></span><span class="c" style="left:300px;width:150px;background:#d9ffd9"></span><span class="c" style="left:450px;width:150px;background:#d9ffd9"></span><span class="c" style="left:600px;width:150px;background:#ccffcc"></span><span class="c" style="left:750px;width:150px;background:#d9ffd9"></span></div>
<div class="row" style="top:32px;width:1102px;background:#d9ffd9"><span class="c" style="left:0;width:150px;background:#d9ffd9"></span><span class="t p" style="left:39px;top:.2px;width:110px">Signature</span><span class="c" style="left:150px;width:150px;background:#d9ffd9"></span><span class="t p" style="left:159px;top:.2px;width:141px">NPC_</span><span class="c" style="left:300px;width:150px;background:#d9ffd9"></span><span class="t y" style="left:309px;top:.2px;width:141px">NPC_</span><span class="c" style="left:450px;width:150px;background:#d9ffd9"></span><span class="t y" style="left:459px;top:.2px;width:141px">NPC_</span><span class="c" style="left:600px;width:150px;background:#ccffcc"></span><span class="t y" style="left:609px;top:.2px;width:141px">NPC_</span><span class="c" style="left:750px;width:150px;background:#d9ffd9"></span><span class="t y" style="left:759px;top:.2px;width:141px">NPC_</span></div>
<div class="row" style="top:47px;width:1102px;background:#d9ffd9"><span class="c" style="left:0;width:150px;background:#d9ffd9"></span><span class="t k" style="left:39px;top:.2px;width:110px">Data Size</span><span class="c" style="left:150px;width:150px;background:#d9ffd9"></span><span class="t k" style="left:159px;top:.2px;width:141px">1127</span><span class="c" style="left:300px;width:150px;background:#d9ffd9"></span><span class="t k" style="left:309px;top:.2px;width:141px">1172</span><span class="c" style="left:450px;width:150px;background:#d9ffd9"></span><span class="t k" style="left:459px;top:.2px;width:141px">1196</span><span class="c" style="left:600px;width:150px;background:#ccffcc"></span><span class="t k" style="left:609px;top:.2px;width:141px">4703</span><span class="c" style="left:750px;width:150px;background:#d9ffd9"></span><span class="t k" style="left:759px;top:.2px;width:141px">4765</span></div>
<div class="row" style="top:62px;width:1102px;background:#d9ffd9"><span class="c" style="left:0;width:150px;background:#d9ffd9"></span><span class="t k" style="left:39px;top:.2px;width:110px;letter-spacing:-0.173px">Record Flags (sorted)</span><span class="c" style="left:150px;width:150px;background:#d9ffd9"></span><span class="t k" style="left:159px;top:.2px;width:141px">Compressed</span><span class="c" style="left:300px;width:150px;background:#d9ffd9"></span><span class="t k" style="left:309px;top:.2px;width:141px">Compressed</span><span class="c" style="left:450px;width:150px;background:#d9ffd9"></span><span class="t k" style="left:459px;top:.2px;width:141px">Compressed</span><span class="c" style="left:600px;width:150px;background:#ccffcc"></span><span class="c" style="left:750px;width:150px;background:#d9ffd9"></span></div>
<div class="row" style="top:77px;width:1102px;background:#eeffee"><span class="c" style="left:0;width:150px;background:#d9ffd9"></span><span class="t k" style="left:54px;top:.2px;width:95px">Compressed</span><span class="c" style="left:150px;width:150px;background:#d9ffd9"></span><span class="t k" style="left:159px;top:.2px;width:141px">Compressed</span><span class="c" style="left:300px;width:150px;background:#d9ffd9"></span><span class="t k" style="left:309px;top:.2px;width:141px">Compressed</span><span class="c" style="left:450px;width:150px;background:#d9ffd9"></span><span class="t k" style="left:459px;top:.2px;width:141px">Compressed</span><span class="c" style="left:600px;width:150px;background:#e6ffe6"></span><span class="c" style="left:750px;width:150px;background:#eeffee"></span></div>
<div class="row" style="top:92px;width:1102px;background:#d9ffd9"><span class="c" style="left:0;width:150px;background:#d9ffd9"></span><span class="t p" style="left:39px;top:.2px;width:110px">FormID</span><span class="c" style="left:150px;width:150px;background:#d9ffd9"></span><span class="t p" style="left:159px;top:.2px;width:141px;letter-spacing:-0.124px">EncCurieSynth "Кюри" [NPC_:00...</span><span class="c" style="left:300px;width:150px;background:#d9ffd9"></span><span class="t y" style="left:309px;top:.2px;width:141px;letter-spacing:-0.124px">EncCurieSynth "Кюри" [NPC_:00...</span><span class="c" style="left:450px;width:150px;background:#d9ffd9"></span><span class="t y" style="left:459px;top:.2px;width:141px;letter-spacing:-0.018px">CompanionEncCurieSynth "Кюр...</span><span class="c" style="left:600px;width:150px;background:#ccffcc"></span><span class="t y" style="left:609px;top:.2px;width:141px;letter-spacing:-0.124px">EncCurieSynth "Кюри" [NPC_:00...</span><span class="c" style="left:750px;width:150px;background:#d9ffd9"></span><span class="t y" style="left:759px;top:.2px;width:141px;letter-spacing:-0.124px">EncCurieSynth "Кюри" [NPC_:00...</span></div>
<div class="row" style="top:107px;width:1102px;background:#d9ffd9"><span class="c" style="left:0;width:150px;background:#d9ffd9"></span><span class="t k" style="left:39px;top:.2px;width:110px;letter-spacing:-0.057px">Version Control Info 1</span><span class="c" style="left:150px;width:150px;background:#d9ffd9"></span><span class="t k" style="left:159px;top:.2px;width:141px;letter-spacing:-0.25px">2019-11-25 User: 42 Index: 0</span><span class="c" style="left:300px;width:150px;background:#d9ffd9"></span><span class="t k" style="left:309px;top:.2px;width:141px;letter-spacing:-0.251px">2016-06-15 User: 0 Index: 0</span><span class="c" style="left:450px;width:150px;background:#d9ffd9"></span><span class="t k" style="left:459px;top:.2px;width:141px">None</span><span class="c" style="left:600px;width:150px;background:#ccffcc"></span><span class="t k" style="left:609px;top:.2px;width:141px">None</span><span class="c" style="left:750px;width:150px;background:#d9ffd9"></span><span class="t k" style="left:759px;top:.2px;width:141px">None</span></div>
<div class="row" style="top:122px;width:1102px;background:#d9ffd9"><span class="c" style="left:0;width:150px;background:#d9ffd9"></span><span class="t k" style="left:39px;top:.2px;width:110px">Form Version</span><span class="c" style="left:150px;width:150px;background:#d9ffd9"></span><span class="t k" style="left:159px;top:.2px;width:141px">131</span><span class="c" style="left:300px;width:150px;background:#d9ffd9"></span><span class="t k" style="left:309px;top:.2px;width:141px">131</span><span class="c" style="left:450px;width:150px;background:#d9ffd9"></span><span class="t k" style="left:459px;top:.2px;width:141px">131</span><span class="c" style="left:600px;width:150px;background:#ccffcc"></span><span class="t k" style="left:609px;top:.2px;width:141px">131</span><span class="c" style="left:750px;width:150px;background:#d9ffd9"></span><span class="t k" style="left:759px;top:.2px;width:141px">131</span></div>
<div class="row" style="top:137px;width:1102px;background:#d9ffd9"><span class="c" style="left:0;width:150px;background:#d9ffd9"></span><span class="t k" style="left:39px;top:.2px;width:110px;letter-spacing:-0.057px">Version Control Info 2</span><span class="c" style="left:150px;width:150px;background:#d9ffd9"></span><span class="t k" style="left:159px;top:.2px;width:141px">0D 00</span><span class="c" style="left:300px;width:150px;background:#d9ffd9"></span><span class="t k" style="left:309px;top:.2px;width:141px">0D 00</span><span class="c" style="left:450px;width:150px;background:#d9ffd9"></span><span class="t k" style="left:459px;top:.2px;width:141px">00 00</span><span class="c" style="left:600px;width:150px;background:#ccffcc"></span><span class="t k" style="left:609px;top:.2px;width:141px">00 00</span><span class="c" style="left:750px;width:150px;background:#d9ffd9"></span><span class="t k" style="left:759px;top:.2px;width:141px">00 00</span></div>
<div class="row" style="top:152px;width:1102px;background:#ffd9d9"><span class="c" style="left:0;width:150px;background:#ffd9d9"></span><span class="t e" style="left:24px;top:.2px;width:125px;letter-spacing:-0.282px">EDID - Editor ID</span><span class="c" style="left:150px;width:150px;background:#ffd9d9"></span><span class="t p" style="left:159px;top:.2px;width:141px">EncCurieSynth</span><span class="c" style="left:300px;width:150px;background:#ffd9d9"></span><span class="t y" style="left:309px;top:.2px;width:141px">EncCurieSynth</span><span class="c" style="left:450px;width:150px;background:#ffd9d9"></span><span class="t g" style="left:459px;top:.2px;width:141px">CompanionEncCurieSynth</span><span class="c" style="left:600px;width:150px;background:#ffcccc"></span><span class="t y" style="left:609px;top:.2px;width:141px">EncCurieSynth</span><span class="c" style="left:750px;width:150px;background:#ffd9d9"></span><span class="t o" style="left:759px;top:.2px;width:141px">EncCurieSynth</span></div>
<div class="row" style="top:167px;width:1102px;background:#eeffee"><span class="c" style="left:0;width:150px;background:#d9ffd9"></span><span class="t q" style="left:24px;top:.2px;width:125px;letter-spacing:-0.024px">VMAD - Virtual Machine Ada...</span><span class="c" style="left:150px;width:150px;background:#eeffee"></span><span class="c" style="left:300px;width:150px;background:#eeffee"></span><span class="c" style="left:450px;width:150px;background:#eeffee"></span><span class="c" style="left:600px;width:150px;background:#e6ffe6"></span><span class="c" style="left:750px;width:150px;background:#eeffee"></span></div>
<div class="row" style="top:182px;width:1102px;background:#d9ffd9"><span class="c" style="left:0;width:150px;background:#d9ffd9"></span><span class="t p" style="left:24px;top:.2px;width:125px;letter-spacing:-0.102px">OBND - Object Bounds</span><span class="c" style="left:150px;width:150px;background:#d9ffd9"></span><span class="c" style="left:300px;width:150px;background:#d9ffd9"></span><span class="c" style="left:450px;width:150px;background:#d9ffd9"></span><span class="c" style="left:600px;width:150px;background:#ccffcc"></span><span class="c" style="left:750px;width:150px;background:#d9ffd9"></span></div>
<div class="row" style="top:197px;width:1102px;background:#d9ffd9"><span class="c" style="left:0;width:150px;background:#d9ffd9"></span><span class="t p" style="left:39px;top:.2px;width:110px">X1</span><span class="c" style="left:150px;width:150px;background:#d9ffd9"></span><span class="t p" style="left:159px;top:.2px;width:141px">-22</span><span class="c" style="left:300px;width:150px;background:#d9ffd9"></span><span class="t y" style="left:309px;top:.2px;width:141px">-22</span><span class="c" style="left:450px;width:150px;background:#d9ffd9"></span><span class="t y" style="left:459px;top:.2px;width:141px">-22</span><span class="c" style="left:600px;width:150px;background:#ccffcc"></span><span class="t y" style="left:609px;top:.2px;width:141px">-22</span><span class="c" style="left:750px;width:150px;background:#d9ffd9"></span><span class="t y" style="left:759px;top:.2px;width:141px">-22</span></div>
<div class="row" style="top:212px;width:1102px;background:#d9ffd9"><span class="c" style="left:0;width:150px;background:#d9ffd9"></span><span class="t p" style="left:39px;top:.2px;width:110px">Y1</span><span class="c" style="left:150px;width:150px;background:#d9ffd9"></span><span class="t p" style="left:159px;top:.2px;width:141px">-14</span><span class="c" style="left:300px;width:150px;background:#d9ffd9"></span><span class="t y" style="left:309px;top:.2px;width:141px">-14</span><span class="c" style="left:450px;width:150px;background:#d9ffd9"></span><span class="t y" style="left:459px;top:.2px;width:141px">-14</span><span class="c" style="left:600px;width:150px;background:#ccffcc"></span><span class="t y" style="left:609px;top:.2px;width:141px">-14</span><span class="c" style="left:750px;width:150px;background:#d9ffd9"></span><span class="t y" style="left:759px;top:.2px;width:141px">-14</span></div>
<div class="row" style="top:227px;width:1102px;background:#d9ffd9"><span class="c" style="left:0;width:150px;background:#d9ffd9"></span><span class="t p" style="left:39px;top:.2px;width:110px">Z1</span><span class="c" style="left:150px;width:150px;background:#d9ffd9"></span><span class="t p" style="left:159px;top:.2px;width:141px">0</span><span class="c" style="left:300px;width:150px;background:#d9ffd9"></span><span class="t y" style="left:309px;top:.2px;width:141px">0</span><span class="c" style="left:450px;width:150px;background:#d9ffd9"></span><span class="t y" style="left:459px;top:.2px;width:141px">0</span><span class="c" style="left:600px;width:150px;background:#ccffcc"></span><span class="t y" style="left:609px;top:.2px;width:141px">0</span><span class="c" style="left:750px;width:150px;background:#d9ffd9"></span><span class="t y" style="left:759px;top:.2px;width:141px">0</span></div>
<div class="row" style="top:242px;width:1102px;background:#d9ffd9"><span class="c" style="left:0;width:150px;background:#d9ffd9"></span><span class="t p" style="left:39px;top:.2px;width:110px">X2</span><span class="c" style="left:150px;width:150px;background:#d9ffd9"></span><span class="t p" style="left:159px;top:.2px;width:141px">22</span><span class="c" style="left:300px;width:150px;background:#d9ffd9"></span><span class="t y" style="left:309px;top:.2px;width:141px">22</span><span class="c" style="left:450px;width:150px;background:#d9ffd9"></span><span class="t y" style="left:459px;top:.2px;width:141px">22</span><span class="c" style="left:600px;width:150px;background:#ccffcc"></span><span class="t y" style="left:609px;top:.2px;width:141px">22</span><span class="c" style="left:750px;width:150px;background:#d9ffd9"></span><span class="t y" style="left:759px;top:.2px;width:141px">22</span></div>
<div class="row" style="top:257px;width:1102px;background:#d9ffd9"><span class="c" style="left:0;width:150px;background:#d9ffd9"></span><span class="t p" style="left:39px;top:.2px;width:110px">Y2</span><span class="c" style="left:150px;width:150px;background:#d9ffd9"></span><span class="t p" style="left:159px;top:.2px;width:141px">14</span><span class="c" style="left:300px;width:150px;background:#d9ffd9"></span><span class="t y" style="left:309px;top:.2px;width:141px">14</span><span class="c" style="left:450px;width:150px;background:#d9ffd9"></span><span class="t y" style="left:459px;top:.2px;width:141px">14</span><span class="c" style="left:600px;width:150px;background:#ccffcc"></span><span class="t y" style="left:609px;top:.2px;width:141px">14</span><span class="c" style="left:750px;width:150px;background:#d9ffd9"></span><span class="t y" style="left:759px;top:.2px;width:141px">14</span></div>
<div class="row" style="top:272px;width:1102px;background:#d9ffd9"><span class="c" style="left:0;width:150px;background:#d9ffd9"></span><span class="t p" style="left:39px;top:.2px;width:110px">Z2</span><span class="c" style="left:150px;width:150px;background:#d9ffd9"></span><span class="t p" style="left:159px;top:.2px;width:141px">128</span><span class="c" style="left:300px;width:150px;background:#d9ffd9"></span><span class="t y" style="left:309px;top:.2px;width:141px">128</span><span class="c" style="left:450px;width:150px;background:#d9ffd9"></span><span class="t y" style="left:459px;top:.2px;width:141px">128</span><span class="c" style="left:600px;width:150px;background:#ccffcc"></span><span class="t y" style="left:609px;top:.2px;width:141px">128</span><span class="c" style="left:750px;width:150px;background:#d9ffd9"></span><span class="t y" style="left:759px;top:.2px;width:141px">128</span></div>
<div class="row" style="top:287px;width:1102px;background:#eeffee"><span class="c" style="left:0;width:150px;background:#d9ffd9"></span><span class="t q" style="left:24px;top:.2px;width:125px;letter-spacing:-0.23px">PTRN - Preview Transform</span><span class="c" style="left:150px;width:150px;background:#eeffee"></span><span class="c" style="left:300px;width:150px;background:#eeffee"></span><span class="c" style="left:450px;width:150px;background:#eeffee"></span><span class="c" style="left:600px;width:150px;background:#e6ffe6"></span><span class="c" style="left:750px;width:150px;background:#eeffee"></span></div>
<div class="row" style="top:302px;width:1102px;background:#eeffee"><span class="c" style="left:0;width:150px;background:#d9ffd9"></span><span class="t q" style="left:24px;top:.2px;width:125px;letter-spacing:-0.131px">STCP - Animation Sound</span><span class="c" style="left:150px;width:150px;background:#eeffee"></span><span class="c" style="left:300px;width:150px;background:#eeffee"></span><span class="c" style="left:450px;width:150px;background:#eeffee"></span><span class="c" style="left:600px;width:150px;background:#e6ffe6"></span><span class="c" style="left:750px;width:150px;background:#eeffee"></span></div>
<div class="row" style="top:317px;width:1102px;background:#ffd9d9"><span class="c" style="left:0;width:150px;background:#ffd9d9"></span><span class="t r" style="left:24px;top:.2px;width:125px;letter-spacing:-0.052px">ACBS - Configuration</span><span class="c" style="left:150px;width:150px;background:#ffd9d9"></span><span class="c" style="left:300px;width:150px;background:#ffd9d9"></span><span class="c" style="left:450px;width:150px;background:#ffd9d9"></span><span class="c" style="left:600px;width:150px;background:#ffcccc"></span><span class="c" style="left:750px;width:150px;background:#ffd9d9"></span></div>
<div class="row" style="top:332px;width:1102px;background:#ffffd9"><span class="c" style="left:0;width:150px;background:#ffffd9"></span><span class="t g" style="left:39px;top:.2px;width:110px;letter-spacing:-0.201px">Flags (sorted)</span><span class="c" style="left:150px;width:150px;background:#ffffd9"></span><span class="t p" style="left:159px;top:.2px;width:141px;letter-spacing:-0.141px">Female, Essential, Auto-calc stat...</span><span class="c" style="left:300px;width:150px;background:#ffffd9"></span><span class="t y" style="left:309px;top:.2px;width:141px;letter-spacing:-0.141px">Female, Essential, Auto-calc stat...</span><span class="c" style="left:450px;width:150px;background:#ffffd9"></span><span class="t y" style="left:459px;top:.2px;width:141px;letter-spacing:-0.141px">Female, Essential, Auto-calc stat...</span><span class="c" style="left:600px;width:150px;background:#ffffcc"></span><span class="t g" style="left:609px;top:.2px;width:141px;letter-spacing:-0.304px">Female, Essential, Is CharGen Fac...</span><span class="c" style="left:750px;width:150px;background:#ffffd9"></span><span class="t g" style="left:759px;top:.2px;width:141px;letter-spacing:-0.304px">Female, Essential, Is CharGen Fac...</span></div>
<div class="row" style="top:347px;width:1102px;background:#d9ffd9"><span class="c" style="left:0;width:150px;background:#d9ffd9"></span><span class="t p" style="left:54px;top:.2px;width:95px">Female</span><span class="c" style="left:150px;width:150px;background:#d9ffd9"></span><span class="t p" style="left:159px;top:.2px;width:141px">Female</span><span class="c" style="left:300px;width:150px;background:#d9ffd9"></span><span class="t y" style="left:309px;top:.2px;width:141px">Female</span><span class="c" style="left:450px;width:150px;background:#d9ffd9"></span><span class="t y" style="left:459px;top:.2px;width:141px">Female</span><span class="c" style="left:600px;width:150px;background:#ccffcc"></span><span class="t y" style="left:609px;top:.2px;width:141px">Female</span><span class="c" style="left:750px;width:150px;background:#d9ffd9"></span><span class="t y" style="left:759px;top:.2px;width:141px">Female</span></div>
<div class="row" style="top:362px;width:1102px;background:#d9ffd9"><span class="c" style="left:0;width:150px;background:#d9ffd9"></span><span class="t p" style="left:54px;top:.2px;width:95px">Essential</span><span class="c" style="left:150px;width:150px;background:#d9ffd9"></span><span class="t p" style="left:159px;top:.2px;width:141px">Essential</span><span class="c" style="left:300px;width:150px;background:#d9ffd9"></span><span class="t y" style="left:309px;top:.2px;width:141px">Essential</span><span class="c" style="left:450px;width:150px;background:#d9ffd9"></span><span class="t y" style="left:459px;top:.2px;width:141px">Essential</span><span class="c" style="left:600px;width:150px;background:#ccffcc"></span><span class="t y" style="left:609px;top:.2px;width:141px">Essential</span><span class="c" style="left:750px;width:150px;background:#d9ffd9"></span><span class="t y" style="left:759px;top:.2px;width:141px">Essential</span></div>
<div class="row" style="top:377px;width:1102px;background:#ffffd9"><span class="c" style="left:0;width:150px;background:#ffffd9"></span><span class="t g" style="left:54px;top:.2px;width:95px;letter-spacing:-0.365px">Is CharGen Face Preset</span><span class="c" style="left:150px;width:150px;background:#ffffee"></span><span class="c" style="left:300px;width:150px;background:#ffffee"></span><span class="c" style="left:450px;width:150px;background:#ffffee"></span><span class="c" style="left:600px;width:150px;background:#ffffcc"></span><span class="t g" style="left:609px;top:.2px;width:141px;letter-spacing:-0.365px">Is CharGen Face Preset</span><span class="c" style="left:750px;width:150px;background:#ffffd9"></span><span class="t g" style="left:759px;top:.2px;width:141px;letter-spacing:-0.365px">Is CharGen Face Preset</span></div>
<div class="row" style="top:392px;width:1102px;background:#d9ffd9"><span class="c" style="left:0;width:150px;background:#d9ffd9"></span><span class="t p" style="left:54px;top:.2px;width:95px;letter-spacing:-0.022px">Auto-calc stats</span><span class="c" style="left:150px;width:150px;background:#d9ffd9"></span><span class="t p" style="left:159px;top:.2px;width:141px;letter-spacing:-0.022px">Auto-calc stats</span><span class="c" style="left:300px;width:150px;background:#d9ffd9"></span><span class="t y" style="left:309px;top:.2px;width:141px;letter-spacing:-0.022px">Auto-calc stats</span><span class="c" style="left:450px;width:150px;background:#d9ffd9"></span><span class="t y" style="left:459px;top:.2px;width:141px;letter-spacing:-0.022px">Auto-calc stats</span><span class="c" style="left:600px;width:150px;background:#ccffcc"></span><span class="t y" style="left:609px;top:.2px;width:141px;letter-spacing:-0.022px">Auto-calc stats</span><span class="c" style="left:750px;width:150px;background:#d9ffd9"></span><span class="t y" style="left:759px;top:.2px;width:141px;letter-spacing:-0.022px">Auto-calc stats</span></div>
<div class="row" style="top:407px;width:1102px;background:#d9ffd9"><span class="c" style="left:0;width:150px;background:#d9ffd9"></span><span class="t p" style="left:54px;top:.2px;width:95px">Unique</span><span class="c" style="left:150px;width:150px;background:#d9ffd9"></span><span class="t p" style="left:159px;top:.2px;width:141px">Unique</span><span class="c" style="left:300px;width:150px;background:#d9ffd9"></span><span class="t y" style="left:309px;top:.2px;width:141px">Unique</span><span class="c" style="left:450px;width:150px;background:#d9ffd9"></span><span class="t y" style="left:459px;top:.2px;width:141px">Unique</span><span class="c" style="left:600px;width:150px;background:#ccffcc"></span><span class="t y" style="left:609px;top:.2px;width:141px">Unique</span><span class="c" style="left:750px;width:150px;background:#d9ffd9"></span><span class="t y" style="left:759px;top:.2px;width:141px">Unique</span></div>
<div class="row" style="top:422px;width:1102px;background:#d9ffd9"><span class="c" style="left:0;width:150px;background:#d9ffd9"></span><span class="t p" style="left:54px;top:.2px;width:95px;letter-spacing:-0.156px">PC Level Mult</span><span class="c" style="left:150px;width:150px;background:#d9ffd9"></span><span class="t p" style="left:159px;top:.2px;width:141px;letter-spacing:-0.156px">PC Level Mult</span><span class="c" style="left:300px;width:150px;background:#d9ffd9"></span><span class="t y" style="left:309px;top:.2px;width:141px;letter-spacing:-0.156px">PC Level Mult</span><span class="c" style="left:450px;width:150px;background:#d9ffd9"></span><span class="t y" style="left:459px;top:.2px;width:141px;letter-spacing:-0.156px">PC Level Mult</span><span class="c" style="left:600px;width:150px;background:#ccffcc"></span><span class="t y" style="left:609px;top:.2px;width:141px;letter-spacing:-0.156px">PC Level Mult</span><span class="c" style="left:750px;width:150px;background:#d9ffd9"></span><span class="t y" style="left:759px;top:.2px;width:141px;letter-spacing:-0.156px">PC Level Mult</span></div>
<div class="row" style="top:437px;width:1102px;background:#d9ffd9"><span class="c" style="left:0;width:150px;background:#d9ffd9"></span><span class="t p" style="left:39px;top:.2px;width:110px;letter-spacing:-0.243px">XP Value Offset</span><span class="c" style="left:150px;width:150px;background:#d9ffd9"></span><span class="t p" style="left:159px;top:.2px;width:141px">0</span><span class="c" style="left:300px;width:150px;background:#d9ffd9"></span><span class="t y" style="left:309px;top:.2px;width:141px">0</span><span class="c" style="left:450px;width:150px;background:#d9ffd9"></span><span class="t y" style="left:459px;top:.2px;width:141px">0</span><span class="c" style="left:600px;width:150px;background:#ccffcc"></span><span class="t y" style="left:609px;top:.2px;width:141px">0</span><span class="c" style="left:750px;width:150px;background:#d9ffd9"></span><span class="t y" style="left:759px;top:.2px;width:141px">0</span></div>
<div class="row" style="top:452px;width:1102px;background:#d9ffd9"><span class="c" style="left:0;width:150px;background:#d9ffd9"></span><span class="t p" style="left:39px;top:.2px;width:110px">Level Mult</span><span class="c" style="left:150px;width:150px;background:#d9ffd9"></span><span class="t p" style="left:159px;top:.2px;width:141px">1.000000</span><span class="c" style="left:300px;width:150px;background:#d9ffd9"></span><span class="t y" style="left:309px;top:.2px;width:141px">1.000000</span><span class="c" style="left:450px;width:150px;background:#d9ffd9"></span><span class="t y" style="left:459px;top:.2px;width:141px">1.000000</span><span class="c" style="left:600px;width:150px;background:#ccffcc"></span><span class="t y" style="left:609px;top:.2px;width:141px">1.000000</span><span class="c" style="left:750px;width:150px;background:#d9ffd9"></span><span class="t y" style="left:759px;top:.2px;width:141px">1.000000</span></div>
<div class="row" style="top:467px;width:1102px;background:#d9ffd9"><span class="c" style="left:0;width:150px;background:#d9ffd9"></span><span class="t p" style="left:39px;top:.2px;width:110px;letter-spacing:-0.073px">Calc min level</span><span class="c" style="left:150px;width:150px;background:#d9ffd9"></span><span class="t p" style="left:159px;top:.2px;width:141px">10</span><span class="c" style="left:300px;width:150px;background:#d9ffd9"></span><span class="t y" style="left:309px;top:.2px;width:141px">10</span><span class="c" style="left:450px;width:150px;background:#d9ffd9"></span><span class="t y" style="left:459px;top:.2px;width:141px">10</span><span class="c" style="left:600px;width:150px;background:#ccffcc"></span><span class="t y" style="left:609px;top:.2px;width:141px">10</span><span class="c" style="left:750px;width:150px;background:#d9ffd9"></span><span class="t y" style="left:759px;top:.2px;width:141px">10</span></div>
<div class="row" style="top:482px;width:1102px;background:#d9ffd9"><span class="c" style="left:0;width:150px;background:#d9ffd9"></span><span class="t p" style="left:39px;top:.2px;width:110px;letter-spacing:-0.18px">Calc max level</span><span class="c" style="left:150px;width:150px;background:#d9ffd9"></span><span class="t p" style="left:159px;top:.2px;width:141px">0</span><span class="c" style="left:300px;width:150px;background:#d9ffd9"></span><span class="t y" style="left:309px;top:.2px;width:141px">0</span><span class="c" style="left:450px;width:150px;background:#d9ffd9"></span><span class="t y" style="left:459px;top:.2px;width:141px">0</span><span class="c" style="left:600px;width:150px;background:#ccffcc"></span><span class="t y" style="left:609px;top:.2px;width:141px">0</span><span class="c" style="left:750px;width:150px;background:#d9ffd9"></span><span class="t y" style="left:759px;top:.2px;width:141px">0</span></div>
<div class="row" style="top:497px;width:1102px;background:#d9ffd9"><span class="c" style="left:0;width:150px;background:#d9ffd9"></span><span class="t p" style="left:39px;top:.2px;width:110px;letter-spacing:-0.165px">Disposition Base</span><span class="c" style="left:150px;width:150px;background:#d9ffd9"></span><span class="t p" style="left:159px;top:.2px;width:141px">35</span><span class="c" style="left:300px;width:150px;background:#d9ffd9"></span><span class="t y" style="left:309px;top:.2px;width:141px">35</span><span class="c" style="left:450px;width:150px;background:#d9ffd9"></span><span class="t y" style="left:459px;top:.2px;width:141px">35</span><span class="c" style="left:600px;width:150px;background:#ccffcc"></span><span class="t y" style="left:609px;top:.2px;width:141px">35</span><span class="c" style="left:750px;width:150px;background:#d9ffd9"></span><span class="t y" style="left:759px;top:.2px;width:141px">35</span></div>
<div class="row" style="top:512px;width:1102px;background:#ffd9d9"><span class="c" style="left:0;width:150px;background:#ffd9d9"></span><span class="t r" style="left:39px;top:.2px;width:110px;letter-spacing:-0.136px">Use Template Actors (sor...</span><span class="c" style="left:150px;width:150px;background:#ffd9d9"></span><span class="t p" style="left:159px;top:.2px;width:141px">Spell List</span><span class="c" style="left:300px;width:150px;background:#ffd9d9"></span><span class="c" style="left:450px;width:150px;background:#ffd9d9"></span><span class="c" style="left:600px;width:150px;background:#ffcccc"></span><span class="t y" style="left:609px;top:.2px;width:141px">Spell List</span><span class="c" style="left:750px;width:150px;background:#ffd9d9"></span><span class="t o" style="left:759px;top:.2px;width:141px">Spell List</span></div>
<div class="row" style="top:527px;width:1102px;background:#ffd9d9"><span class="c" style="left:0;width:150px;background:#ffd9d9"></span><span class="t r" style="left:54px;top:.2px;width:95px">Spell List</span><span class="c" style="left:150px;width:150px;background:#ffd9d9"></span><span class="t p" style="left:159px;top:.2px;width:141px">Spell List</span><span class="c" style="left:300px;width:150px;background:#ffecec"></span><span class="c" style="left:450px;width:150px;background:#ffecec"></span><span class="c" style="left:600px;width:150px;background:#ffcccc"></span><span class="t y" style="left:609px;top:.2px;width:141px">Spell List</span><span class="c" style="left:750px;width:150px;background:#ffd9d9"></span><span class="t o" style="left:759px;top:.2px;width:141px">Spell List</span></div>
<div class="row" style="top:542px;width:1102px;background:#d9ffd9"><span class="c" style="left:0;width:150px;background:#d9ffd9"></span><span class="t p" style="left:39px;top:.2px;width:110px;letter-spacing:-0.091px">Bleedout Override</span><span class="c" style="left:150px;width:150px;background:#d9ffd9"></span><span class="t p" style="left:159px;top:.2px;width:141px">0</span><span class="c" style="left:300px;width:150px;background:#d9ffd9"></span><span class="t y" style="left:309px;top:.2px;width:141px">0</span><span class="c" style="left:450px;width:150px;background:#d9ffd9"></span><span class="t y" style="left:459px;top:.2px;width:141px">0</span><span class="c" style="left:600px;width:150px;background:#ccffcc"></span><span class="t y" style="left:609px;top:.2px;width:141px">0</span><span class="c" style="left:750px;width:150px;background:#d9ffd9"></span><span class="t y" style="left:759px;top:.2px;width:141px">0</span></div>
<div class="row" style="top:557px;width:1102px;background:#d9ffd9"><span class="c" style="left:0;width:150px;background:#d9ffd9"></span><span class="t p" style="left:39px;top:.2px;width:110px">Unknown</span><span class="c" style="left:150px;width:150px;background:#d9ffd9"></span><span class="t p" style="left:159px;top:.2px;width:141px">C2 D1</span><span class="c" style="left:300px;width:150px;background:#d9ffd9"></span><span class="t y" style="left:309px;top:.2px;width:141px">C2 D1</span><span class="c" style="left:450px;width:150px;background:#d9ffd9"></span><span class="t y" style="left:459px;top:.2px;width:141px">C2 D1</span><span class="c" style="left:600px;width:150px;background:#ccffcc"></span><span class="t y" style="left:609px;top:.2px;width:141px">C2 D1</span><span class="c" style="left:750px;width:150px;background:#d9ffd9"></span><span class="t y" style="left:759px;top:.2px;width:141px">C2 D1</span></div>
<div class="row" style="top:572px;width:1102px;background:#d9ffd9"><span class="c" style="left:0;width:150px;background:#d9ffd9"></span><span class="t p" style="left:24px;top:.2px;width:125px;letter-spacing:-0.125px">Factions (sorted)</span><span class="c" style="left:150px;width:150px;background:#d9ffd9"></span><span class="c" style="left:300px;width:150px;background:#d9ffd9"></span><span class="c" style="left:450px;width:150px;background:#d9ffd9"></span><span class="c" style="left:600px;width:150px;background:#ccffcc"></span><span class="c" style="left:750px;width:150px;background:#d9ffd9"></span></div>
<div class="row" style="top:587px;width:1102px;background:#d9ffd9"><span class="c" style="left:0;width:150px;background:#d9ffd9"></span><span class="t p" style="left:39px;top:.2px;width:110px;letter-spacing:-0.073px">SNAM - Faction</span><span class="c" style="left:150px;width:150px;background:#d9ffd9"></span><span class="c" style="left:300px;width:150px;background:#d9ffd9"></span><span class="c" style="left:450px;width:150px;background:#d9ffd9"></span><span class="c" style="left:600px;width:150px;background:#ccffcc"></span><span class="c" style="left:750px;width:150px;background:#d9ffd9"></span></div>
<div class="row" style="top:602px;width:1102px;background:#d9ffd9"><span class="c" style="left:0;width:150px;background:#d9ffd9"></span><span class="t p" style="left:54px;top:.2px;width:95px">Faction</span><span class="c" style="left:150px;width:150px;background:#d9ffd9"></span><span class="t p" style="left:159px;top:.2px;width:141px;letter-spacing:-0.028px">CurrentCompanionFaction [FAC...</span><span class="c" style="left:300px;width:150px;background:#d9ffd9"></span><span class="t y" style="left:309px;top:.2px;width:141px;letter-spacing:-0.028px">CurrentCompanionFaction [FAC...</span><span class="c" style="left:450px;width:150px;background:#d9ffd9"></span><span class="t y" style="left:459px;top:.2px;width:141px;letter-spacing:-0.028px">CurrentCompanionFaction [FAC...</span><span class="c" style="left:600px;width:150px;background:#ccffcc"></span><span class="t y" style="left:609px;top:.2px;width:141px;letter-spacing:-0.028px">CurrentCompanionFaction [FAC...</span><span class="c" style="left:750px;width:150px;background:#d9ffd9"></span><span class="t y" style="left:759px;top:.2px;width:141px;letter-spacing:-0.028px">CurrentCompanionFaction [FAC...</span></div>
<div class="row" style="top:617px;width:1102px;background:#d9ffd9"><span class="c" style="left:0;width:150px;background:#d9ffd9"></span><span class="t p" style="left:54px;top:.2px;width:95px">Rank</span><span class="c" style="left:150px;width:150px;background:#d9ffd9"></span><span class="t p" style="left:159px;top:.2px;width:141px">-1</span><span class="c" style="left:300px;width:150px;background:#d9ffd9"></span><span class="t y" style="left:309px;top:.2px;width:141px">-1</span><span class="c" style="left:450px;width:150px;background:#d9ffd9"></span><span class="t y" style="left:459px;top:.2px;width:141px">-1</span><span class="c" style="left:600px;width:150px;background:#ccffcc"></span><span class="t y" style="left:609px;top:.2px;width:141px">-1</span><span class="c" style="left:750px;width:150px;background:#d9ffd9"></span><span class="t y" style="left:759px;top:.2px;width:141px">-1</span></div>
<div class="row" style="top:632px;width:1102px;background:#d9ffd9"><span class="c" style="left:0;width:150px;background:#d9ffd9"></span><span class="t p" style="left:39px;top:.2px;width:110px;letter-spacing:-0.073px">SNAM - Faction</span><span class="c" style="left:150px;width:150px;background:#d9ffd9"></span><span class="c" style="left:300px;width:150px;background:#d9ffd9"></span><span class="c" style="left:450px;width:150px;background:#d9ffd9"></span><span class="c" style="left:600px;width:150px;background:#ccffcc"></span><span class="c" style="left:750px;width:150px;background:#d9ffd9"></span></div>
<div class="row" style="top:647px;width:1102px;background:#d9ffd9"><span class="c" style="left:0;width:150px;background:#d9ffd9"></span><span class="t p" style="left:54px;top:.2px;width:95px">Faction</span><span class="c" style="left:150px;width:150px;background:#d9ffd9"></span><span class="t p" style="left:159px;top:.2px;width:141px;letter-spacing:-0.05px">Voices_CompanionsFaction "Дл...</span><span class="c" style="left:300px;width:150px;background:#d9ffd9"></span><span class="t y" style="left:309px;top:.2px;width:141px;letter-spacing:-0.05px">Voices_CompanionsFaction "Дл...</span><span class="c" style="left:450px;width:150px;background:#d9ffd9"></span><span class="t y" style="left:459px;top:.2px;width:141px;letter-spacing:-0.05px">Voices_CompanionsFaction "Дл...</span><span class="c" style="left:600px;width:150px;background:#ccffcc"></span><span class="t y" style="left:609px;top:.2px;width:141px;letter-spacing:-0.05px">Voices_CompanionsFaction "Дл...</span><span class="c" style="left:750px;width:150px;background:#d9ffd9"></span><span class="t y" style="left:759px;top:.2px;width:141px;letter-spacing:-0.05px">Voices_CompanionsFaction "Дл...</span></div>
<div class="row" style="top:662px;width:1102px;background:#d9ffd9"><span class="c" style="left:0;width:150px;background:#d9ffd9"></span><span class="t p" style="left:54px;top:.2px;width:95px">Rank</span><span class="c" style="left:150px;width:150px;background:#d9ffd9"></span><span class="t p" style="left:159px;top:.2px;width:141px">0</span><span class="c" style="left:300px;width:150px;background:#d9ffd9"></span><span class="t y" style="left:309px;top:.2px;width:141px">0</span><span class="c" style="left:450px;width:150px;background:#d9ffd9"></span><span class="t y" style="left:459px;top:.2px;width:141px">0</span><span class="c" style="left:600px;width:150px;background:#ccffcc"></span><span class="t y" style="left:609px;top:.2px;width:141px">0</span><span class="c" style="left:750px;width:150px;background:#d9ffd9"></span><span class="t y" style="left:759px;top:.2px;width:141px">0</span></div>
<div class="row" style="top:677px;width:1102px;background:#d9ffd9"><span class="c" style="left:0;width:150px;background:#d9ffd9"></span><span class="t p" style="left:39px;top:.2px;width:110px;letter-spacing:-0.073px">SNAM - Faction</span><span class="c" style="left:150px;width:150px;background:#d9ffd9"></span><span class="c" style="left:300px;width:150px;background:#d9ffd9"></span><span class="c" style="left:450px;width:150px;background:#d9ffd9"></span><span class="c" style="left:600px;width:150px;background:#ccffcc"></span><span class="c" style="left:750px;width:150px;background:#d9ffd9"></span></div>
<div class="row" style="top:692px;width:1102px;background:#d9ffd9"><span class="c" style="left:0;width:150px;background:#d9ffd9"></span><span class="t p" style="left:54px;top:.2px;width:95px">Faction</span><span class="c" style="left:150px;width:150px;background:#d9ffd9"></span><span class="t p" style="left:159px;top:.2px;width:141px">HasBeenCompanionFaction [FA...</span><span class="c" style="left:300px;width:150px;background:#d9ffd9"></span><span class="t y" style="left:309px;top:.2px;width:141px">HasBeenCompanionFaction [FA...</span><span class="c" style="left:450px;width:150px;background:#d9ffd9"></span><span class="t y" style="left:459px;top:.2px;width:141px">HasBeenCompanionFaction [FA...</span><span class="c" style="left:600px;width:150px;background:#ccffcc"></span><span class="t y" style="left:609px;top:.2px;width:141px">HasBeenCompanionFaction [FA...</span><span class="c" style="left:750px;width:150px;background:#d9ffd9"></span><span class="t y" style="left:759px;top:.2px;width:141px">HasBeenCompanionFaction [FA...</span></div>
<div class="row" style="top:707px;width:1102px;background:#d9ffd9"><span class="c" style="left:0;width:150px;background:#d9ffd9"></span><span class="t p" style="left:54px;top:.2px;width:95px">Rank</span><span class="c" style="left:150px;width:150px;background:#d9ffd9"></span><span class="t p" style="left:159px;top:.2px;width:141px">-1</span><span class="c" style="left:300px;width:150px;background:#d9ffd9"></span><span class="t y" style="left:309px;top:.2px;width:141px">-1</span><span class="c" style="left:450px;width:150px;background:#d9ffd9"></span><span class="t y" style="left:459px;top:.2px;width:141px">-1</span><span class="c" style="left:600px;width:150px;background:#ccffcc"></span><span class="t y" style="left:609px;top:.2px;width:141px">-1</span><span class="c" style="left:750px;width:150px;background:#d9ffd9"></span><span class="t y" style="left:759px;top:.2px;width:141px">-1</span></div>
<div class="row" style="top:722px;width:1102px;background:#d9ffd9"><span class="c" style="left:0;width:150px;background:#d9ffd9"></span><span class="t p" style="left:39px;top:.2px;width:110px;letter-spacing:-0.073px">SNAM - Faction</span><span class="c" style="left:150px;width:150px;background:#d9ffd9"></span><span class="c" style="left:300px;width:150px;background:#d9ffd9"></span><span class="c" style="left:450px;width:150px;background:#d9ffd9"></span><span class="c" style="left:600px;width:150px;background:#ccffcc"></span><span class="c" style="left:750px;width:150px;background:#d9ffd9"></span></div>
<div class="row" style="top:737px;width:1102px;background:#d9ffd9"><span class="c" style="left:0;width:150px;background:#d9ffd9"></span><span class="t p" style="left:54px;top:.2px;width:95px">Faction</span><span class="c" style="left:150px;width:150px;background:#d9ffd9"></span><span class="t p" style="left:159px;top:.2px;width:141px">CompanionCrimeFaction_Curie ...</span><span class="c" style="left:300px;width:150px;background:#d9ffd9"></span><span class="t y" style="left:309px;top:.2px;width:141px">CompanionCrimeFaction_Curie ...</span><span class="c" style="left:450px;width:150px;background:#d9ffd9"></span><span class="t y" style="left:459px;top:.2px;width:141px">CompanionCrimeFaction_Curie ...</span><span class="c" style="left:600px;width:150px;background:#ccffcc"></span><span class="t y" style="left:609px;top:.2px;width:141px">CompanionCrimeFaction_Curie ...</span><span class="c" style="left:750px;width:150px;background:#d9ffd9"></span><span class="t y" style="left:759px;top:.2px;width:141px">CompanionCrimeFaction_Curie ...</span></div>
<div class="row" style="top:752px;width:1102px;background:#d9ffd9"><span class="c" style="left:0;width:150px;background:#d9ffd9"></span><span class="t p" style="left:54px;top:.2px;width:95px">Rank</span><span class="c" style="left:150px;width:150px;background:#d9ffd9"></span><span class="t p" style="left:159px;top:.2px;width:141px">0</span><span class="c" style="left:300px;width:150px;background:#d9ffd9"></span><span class="t y" style="left:309px;top:.2px;width:141px">0</span><span class="c" style="left:450px;width:150px;background:#d9ffd9"></span><span class="t y" style="left:459px;top:.2px;width:141px">0</span><span class="c" style="left:600px;width:150px;background:#ccffcc"></span><span class="t y" style="left:609px;top:.2px;width:141px">0</span><span class="c" style="left:750px;width:150px;background:#d9ffd9"></span><span class="t y" style="left:759px;top:.2px;width:141px">0</span></div>
<div class="row" style="top:767px;width:1102px;background:#eeffee"><span class="c" style="left:0;width:150px;background:#d9ffd9"></span><span class="t q" style="left:24px;top:.2px;width:125px;letter-spacing:0.023px">INAM - Death item</span><span class="c" style="left:150px;width:150px;background:#eeffee"></span><span class="c" style="left:300px;width:150px;background:#eeffee"></span><span class="c" style="left:450px;width:150px;background:#eeffee"></span><span class="c" style="left:600px;width:150px;background:#e6ffe6"></span><span class="c" style="left:750px;width:150px;background:#eeffee"></span></div>
<div class="row" style="top:782px;width:1102px;background:#d9ffd9"><span class="c" style="left:0;width:150px;background:#d9ffd9"></span><span class="t p" style="left:24px;top:.2px;width:125px;letter-spacing:-0.385px">VTCK - Voice</span><span class="c" style="left:150px;width:150px;background:#d9ffd9"></span><span class="t p" style="left:159px;top:.2px;width:141px;letter-spacing:-0.418px">NPCFCurie [VTYP:001647BF]</span><span class="c" style="left:300px;width:150px;background:#d9ffd9"></span><span class="t y" style="left:309px;top:.2px;width:141px;letter-spacing:-0.418px">NPCFCurie [VTYP:001647BF]</span><span class="c" style="left:450px;width:150px;background:#d9ffd9"></span><span class="t y" style="left:459px;top:.2px;width:141px;letter-spacing:-0.418px">NPCFCurie [VTYP:001647BF]</span><span class="c" style="left:600px;width:150px;background:#ccffcc"></span><span class="t y" style="left:609px;top:.2px;width:141px;letter-spacing:-0.418px">NPCFCurie [VTYP:001647BF]</span><span class="c" style="left:750px;width:150px;background:#d9ffd9"></span><span class="t y" style="left:759px;top:.2px;width:141px;letter-spacing:-0.418px">NPCFCurie [VTYP:001647BF]</span></div>
<div class="row" style="top:797px;width:1102px;background:#d9ffd9"><span class="c" style="left:0;width:150px;background:#d9ffd9"></span><span class="t p" style="left:24px;top:.2px;width:125px;letter-spacing:-0.167px">TPLT - Default Template</span><span class="c" style="left:150px;width:150px;background:#d9ffd9"></span><span class="t p" style="left:159px;top:.2px;width:141px;letter-spacing:-0.139px">EncSynth02Template "Синт-сле...</span><span class="c" style="left:300px;width:150px;background:#d9ffd9"></span><span class="t y" style="left:309px;top:.2px;width:141px;letter-spacing:-0.139px">EncSynth02Template "Синт-сле...</span><span class="c" style="left:450px;width:150px;background:#d9ffd9"></span><span class="t y" style="left:459px;top:.2px;width:141px;letter-spacing:-0.139px">EncSynth02Template "Синт-сле...</span><span class="c" style="left:600px;width:150px;background:#ccffcc"></span><span class="t y" style="left:609px;top:.2px;width:141px;letter-spacing:-0.139px">EncSynth02Template "Синт-сле...</span><span class="c" style="left:750px;width:150px;background:#d9ffd9"></span><span class="t y" style="left:759px;top:.2px;width:141px;letter-spacing:-0.139px">EncSynth02Template "Синт-сле...</span></div>
<div class="row" style="top:812px;width:1102px;background:#eeffee"><span class="c" style="left:0;width:150px;background:#d9ffd9"></span><span class="t q" style="left:24px;top:.2px;width:125px;letter-spacing:-0.206px">LTPT - Legendary Template</span><span class="c" style="left:150px;width:150px;background:#eeffee"></span><span class="c" style="left:300px;width:150px;background:#eeffee"></span><span class="c" style="left:450px;width:150px;background:#eeffee"></span><span class="c" style="left:600px;width:150px;background:#e6ffe6"></span><span class="c" style="left:750px;width:150px;background:#eeffee"></span></div>
<div class="row" style="top:827px;width:1102px;background:#eeffee"><span class="c" style="left:0;width:150px;background:#d9ffd9"></span><span class="t q" style="left:24px;top:.2px;width:125px;letter-spacing:-0.234px">LTPC - Legendary Chance</span><span class="c" style="left:150px;width:150px;background:#eeffee"></span><span class="c" style="left:300px;width:150px;background:#eeffee"></span><span class="c" style="left:450px;width:150px;background:#eeffee"></span><span class="c" style="left:600px;width:150px;background:#e6ffe6"></span><span class="c" style="left:750px;width:150px;background:#eeffee"></span></div>
<div class="row" style="top:842px;width:1102px;background:#ffffee"><span class="c" style="left:0;width:150px;background:#ffffd9"></span><span class="t g" style="left:24px;top:.2px;width:125px;letter-spacing:-0.123px">TPTA - Template Actors</span><span class="c" style="left:150px;width:150px;background:#ffffd9"></span><span class="c" style="left:300px;width:150px;background:#ffffee"></span><span class="c" style="left:450px;width:150px;background:#ffffee"></span><span class="c" style="left:600px;width:150px;background:#ffffcc"></span><span class="c" style="left:750px;width:150px;background:#ffffee"></span></div>
<div class="row" style="top:857px;width:1102px;background:#ffffee"><span class="c" style="left:0;width:150px;background:#ffffd9"></span><span class="t g" style="left:39px;top:.2px;width:110px">Spell List</span><span class="c" style="left:150px;width:150px;background:#ffffd9"></span><span class="t p" style="left:159px;top:.2px;width:141px;letter-spacing:-0.139px">EncSynth02Template "Синт-сле...</span><span class="c" style="left:300px;width:150px;background:#ffffee"></span><span class="c" style="left:450px;width:150px;background:#ffffee"></span><span class="c" style="left:600px;width:150px;background:#ffffcc"></span><span class="t y" style="left:609px;top:.2px;width:141px;letter-spacing:-0.139px">EncSynth02Template "Синт-сле...</span><span class="c" style="left:750px;width:150px;background:#ffffee"></span></div>
<div class="row" style="top:872px;width:1102px;background:#d9ffd9"><span class="c" style="left:0;width:150px;background:#d9ffd9"></span><span class="t p" style="left:24px;top:.2px;width:125px;letter-spacing:-0.255px">RNAM - Race</span><span class="c" style="left:150px;width:150px;background:#d9ffd9"></span><span class="t p" style="left:159px;top:.2px;width:141px;letter-spacing:-0.154px">HumanRace "Человек" [RACE:0...</span><span class="c" style="left:300px;width:150px;background:#d9ffd9"></span><span class="t y" style="left:309px;top:.2px;width:141px;letter-spacing:-0.154px">HumanRace "Человек" [RACE:0...</span><span class="c" style="left:450px;width:150px;background:#d9ffd9"></span><span class="t y" style="left:459px;top:.2px;width:141px;letter-spacing:-0.154px">HumanRace "Человек" [RACE:0...</span><span class="c" style="left:600px;width:150px;background:#ccffcc"></span><span class="t y" style="left:609px;top:.2px;width:141px;letter-spacing:-0.154px">HumanRace "Человек" [RACE:0...</span><span class="c" style="left:750px;width:150px;background:#d9ffd9"></span><span class="t y" style="left:759px;top:.2px;width:141px;letter-spacing:-0.154px">HumanRace "Человек" [RACE:0...</span></div>
<div class="row" style="top:887px;width:1102px;background:#f2ffd9"><span class="c" style="left:0;width:150px;background:#f2ffd9"></span><span class="t k" style="left:24px;top:.2px;width:125px;letter-spacing:-0.263px">SPCT - Count</span><span class="c" style="left:150px;width:150px;background:#f9ffee"></span><span class="c" style="left:300px;width:150px;background:#f2ffd9"></span><span class="t k" style="left:309px;top:.2px;width:141px">1</span><span class="c" style="left:450px;width:150px;background:#f2ffd9"></span><span class="t k" style="left:459px;top:.2px;width:141px">1</span><span class="c" style="left:600px;width:150px;background:#f6ffe6"></span><span class="c" style="left:750px;width:150px;background:#f2ffd9"></span><span class="t k" style="left:759px;top:.2px;width:141px">1</span></div>
<div class="row" style="top:902px;width:1102px;background:#ffffd9"><span class="c" style="left:0;width:150px;background:#ffffd9"></span><span class="t g" style="left:24px;top:.2px;width:125px;letter-spacing:-0.076px">Actor Effects (sorted)</span><span class="c" style="left:150px;width:150px;background:#ffffee"></span><span class="c" style="left:300px;width:150px;background:#ffffd9"></span><span class="c" style="left:450px;width:150px;background:#ffffd9"></span><span class="c" style="left:600px;width:150px;background:#ffffe6"></span><span class="c" style="left:750px;width:150px;background:#ffffd9"></span></div>
<div class="row" style="top:917px;width:1102px;background:#ffffd9"><span class="c" style="left:0;width:150px;background:#ffffd9"></span><span class="t g" style="left:39px;top:.2px;width:110px">SPLO - Actor Effect</span><span class="c" style="left:150px;width:150px;background:#ffffee"></span><span class="c" style="left:300px;width:150px;background:#ffffd9"></span><span class="t g" style="left:309px;top:.2px;width:141px;letter-spacing:-0.065px">AbMagLiveLoveCompanionPerk...</span><span class="c" style="left:450px;width:150px;background:#ffffd9"></span><span class="t g" style="left:459px;top:.2px;width:141px;letter-spacing:-0.065px">AbMagLiveLoveCompanionPerk...</span><span class="c" style="left:600px;width:150px;background:#ffffe6"></span><span class="c" style="left:750px;width:150px;background:#ffffd9"></span><span class="t g" style="left:759px;top:.2px;width:141px;letter-spacing:-0.065px">AbMagLiveLoveCompanionPerk...</span></div>
<svg class="a" style="left:0;top:17px" width="1102" height="915" viewBox="0 0 1102 915"><path d="M0 14.5H1102" stroke="#fff" stroke-opacity=".55" stroke-width="1"/><path d="M0 29.5H1102" stroke="#fff" stroke-opacity=".55" stroke-width="1"/><path d="M0 44.5H1102" stroke="#fff" stroke-opacity=".55" stroke-width="1"/><path d="M0 59.5H1102" stroke="#fff" stroke-opacity=".55" stroke-width="1"/><path d="M0 74.5H1102" stroke="#fff" stroke-opacity=".55" stroke-width="1"/><path d="M0 89.5H1102" stroke="#fff" stroke-opacity=".55" stroke-width="1"/><path d="M0 104.5H1102" stroke="#fff" stroke-opacity=".55" stroke-width="1"/><path d="M0 119.5H1102" stroke="#fff" stroke-opacity=".55" stroke-width="1"/><path d="M0 134.5H1102" stroke="#fff" stroke-opacity=".7" stroke-width="1"/><path d="M0 134.5H1102" stroke="#8a8a8a" stroke-opacity=".55" stroke-width="1" stroke-dasharray="1.5 1.5"/><path d="M0 149.5H1102" stroke="#fff" stroke-opacity=".7" stroke-width="1"/><path d="M0 149.5H1102" stroke="#8a8a8a" stroke-opacity=".55" stroke-width="1" stroke-dasharray="1.5 1.5"/><path d="M0 164.5H1102" stroke="#fff" stroke-opacity=".7" stroke-width="1"/><path d="M0 164.5H1102" stroke="#8a8a8a" stroke-opacity=".55" stroke-width="1" stroke-dasharray="1.5 1.5"/><path d="M0 179.5H1102" stroke="#fff" stroke-opacity=".55" stroke-width="1"/><path d="M0 194.5H1102" stroke="#fff" stroke-opacity=".55" stroke-width="1"/><path d="M0 209.5H1102" stroke="#fff" stroke-opacity=".55" stroke-width="1"/><path d="M0 224.5H1102" stroke="#fff" stroke-opacity=".55" stroke-width="1"/><path d="M0 239.5H1102" stroke="#fff" stroke-opacity=".55" stroke-width="1"/><path d="M0 254.5H1102" stroke="#fff" stroke-opacity=".55" stroke-width="1"/><path d="M0 269.5H1102" stroke="#fff" stroke-opacity=".7" stroke-width="1"/><path d="M0 269.5H1102" stroke="#8a8a8a" stroke-opacity=".55" stroke-width="1" stroke-dasharray="1.5 1.5"/><path d="M0 284.5H1102" stroke="#fff" stroke-opacity=".7" stroke-width="1"/><path d="M0 284.5H1102" stroke="#8a8a8a" stroke-opacity=".55" stroke-width="1" stroke-dasharray="1.5 1.5"/><path d="M0 299.5H1102" stroke="#fff" stroke-opacity=".7" stroke-width="1"/><path d="M0 299.5H1102" stroke="#8a8a8a" stroke-opacity=".55" stroke-width="1" stroke-dasharray="1.5 1.5"/><path d="M0 314.5H1102" stroke="#fff" stroke-opacity=".55" stroke-width="1"/><path d="M0 329.5H1102" stroke="#fff" stroke-opacity=".55" stroke-width="1"/><path d="M0 344.5H1102" stroke="#fff" stroke-opacity=".55" stroke-width="1"/><path d="M0 359.5H1102" stroke="#fff" stroke-opacity=".55" stroke-width="1"/><path d="M0 374.5H1102" stroke="#fff" stroke-opacity=".55" stroke-width="1"/><path d="M0 389.5H1102" stroke="#fff" stroke-opacity=".55" stroke-width="1"/><path d="M0 404.5H1102" stroke="#fff" stroke-opacity=".55" stroke-width="1"/><path d="M0 419.5H1102" stroke="#fff" stroke-opacity=".55" stroke-width="1"/><path d="M0 434.5H1102" stroke="#fff" stroke-opacity=".55" stroke-width="1"/><path d="M0 449.5H1102" stroke="#fff" stroke-opacity=".55" stroke-width="1"/><path d="M0 464.5H1102" stroke="#fff" stroke-opacity=".55" stroke-width="1"/><path d="M0 479.5H1102" stroke="#fff" stroke-opacity=".55" stroke-width="1"/><path d="M0 494.5H1102" stroke="#fff" stroke-opacity=".55" stroke-width="1"/><path d="M0 509.5H1102" stroke="#fff" stroke-opacity=".55" stroke-width="1"/><path d="M0 524.5H1102" stroke="#fff" stroke-opacity=".55" stroke-width="1"/><path d="M0 539.5H1102" stroke="#fff" stroke-opacity=".55" stroke-width="1"/><path d="M0 554.5H1102" stroke="#fff" stroke-opacity=".7" stroke-width="1"/><path d="M0 554.5H1102" stroke="#8a8a8a" stroke-opacity=".55" stroke-width="1" stroke-dasharray="1.5 1.5"/><path d="M0 569.5H1102" stroke="#fff" stroke-opacity=".55" stroke-width="1"/><path d="M0 584.5H1102" stroke="#fff" stroke-opacity=".55" stroke-width="1"/><path d="M0 599.5H1102" stroke="#fff" stroke-opacity=".55" stroke-width="1"/><path d="M0 614.5H1102" stroke="#fff" stroke-opacity=".55" stroke-width="1"/><path d="M0 629.5H1102" stroke="#fff" stroke-opacity=".55" stroke-width="1"/><path d="M0 644.5H1102" stroke="#fff" stroke-opacity=".55" stroke-width="1"/><path d="M0 659.5H1102" stroke="#fff" stroke-opacity=".55" stroke-width="1"/><path d="M0 674.5H1102" stroke="#fff" stroke-opacity=".55" stroke-width="1"/><path d="M0 689.5H1102" stroke="#fff" stroke-opacity=".55" stroke-width="1"/><path d="M0 704.5H1102" stroke="#fff" stroke-opacity=".55" stroke-width="1"/><path d="M0 719.5H1102" stroke="#fff" stroke-opacity=".55" stroke-width="1"/><path d="M0 734.5H1102" stroke="#fff" stroke-opacity=".55" stroke-width="1"/><path d="M0 749.5H1102" stroke="#fff" stroke-opacity=".7" stroke-width="1"/><path d="M0 749.5H1102" stroke="#8a8a8a" stroke-opacity=".55" stroke-width="1" stroke-dasharray="1.5 1.5"/><path d="M0 764.5H1102" stroke="#fff" stroke-opacity=".7" stroke-width="1"/><path d="M0 764.5H1102" stroke="#8a8a8a" stroke-opacity=".55" stroke-width="1" stroke-dasharray="1.5 1.5"/><path d="M0 779.5H1102" stroke="#fff" stroke-opacity=".7" stroke-width="1"/><path d="M0 779.5H1102" stroke="#8a8a8a" stroke-opacity=".55" stroke-width="1" stroke-dasharray="1.5 1.5"/><path d="M0 794.5H1102" stroke="#fff" stroke-opacity=".7" stroke-width="1"/><path d="M0 794.5H1102" stroke="#8a8a8a" stroke-opacity=".55" stroke-width="1" stroke-dasharray="1.5 1.5"/><path d="M0 809.5H1102" stroke="#fff" stroke-opacity=".7" stroke-width="1"/><path d="M0 809.5H1102" stroke="#8a8a8a" stroke-opacity=".55" stroke-width="1" stroke-dasharray="1.5 1.5"/><path d="M0 824.5H1102" stroke="#fff" stroke-opacity=".7" stroke-width="1"/><path d="M0 824.5H1102" stroke="#8a8a8a" stroke-opacity=".55" stroke-width="1" stroke-dasharray="1.5 1.5"/><path d="M0 839.5H1102" stroke="#fff" stroke-opacity=".55" stroke-width="1"/><path d="M0 854.5H1102" stroke="#fff" stroke-opacity=".7" stroke-width="1"/><path d="M0 854.5H1102" stroke="#8a8a8a" stroke-opacity=".55" stroke-width="1" stroke-dasharray="1.5 1.5"/><path d="M0 869.5H1102" stroke="#fff" stroke-opacity=".7" stroke-width="1"/><path d="M0 869.5H1102" stroke="#8a8a8a" stroke-opacity=".55" stroke-width="1" stroke-dasharray="1.5 1.5"/><path d="M0 884.5H1102" stroke="#fff" stroke-opacity=".7" stroke-width="1"/><path d="M0 884.5H1102" stroke="#8a8a8a" stroke-opacity=".55" stroke-width="1" stroke-dasharray="1.5 1.5"/><path d="M0 899.5H1102" stroke="#fff" stroke-opacity=".55" stroke-width="1"/><path d="M0 914.5H1102" stroke="#fff" stroke-opacity=".7" stroke-width="1"/><path d="M0 914.5H1102" stroke="#8a8a8a" stroke-opacity=".55" stroke-width="1" stroke-dasharray="1.5 1.5"/><path d="M149.5 0V915" stroke="#fff" stroke-opacity=".7" stroke-width="1"/><path d="M149.5 0V915" stroke="#8a8a8a" stroke-opacity=".55" stroke-width="1" stroke-dasharray="1.5 1.5"/><path d="M299.5 0V915" stroke="#fff" stroke-opacity=".55" stroke-width="1"/><path d="M449.5 0V915" stroke="#fff" stroke-opacity=".55" stroke-width="1"/><path d="M599.5 0V915" stroke="#fff" stroke-opacity=".55" stroke-width="1"/><path d="M749.5 0V915" stroke="#fff" stroke-opacity=".55" stroke-width="1"/><path d="M899.5 0V915" stroke="#fff" stroke-opacity=".55" stroke-width="1"/><path d="M11.5 11.5V15" stroke="#8c8c8c" stroke-opacity=".5" stroke-width="1" stroke-dasharray="2 1"/><path d="M16.5 7.5H21" stroke="#8c8c8c" stroke-opacity=".5" stroke-width="1" stroke-dasharray="2 1"/><path d="M11.5 15V30" stroke="#8c8c8c" stroke-opacity=".5" stroke-width="1" stroke-dasharray="2 1"/><path d="M26.5 15V30" stroke="#8c8c8c" stroke-opacity=".5" stroke-width="1" stroke-dasharray="2 1"/><path d="M27.5 22.5H36" stroke="#8c8c8c" stroke-opacity=".5" stroke-width="1" stroke-dasharray="2 1"/><path d="M11.5 30V45" stroke="#8c8c8c" stroke-opacity=".5" stroke-width="1" stroke-dasharray="2 1"/><path d="M26.5 30V45" stroke="#8c8c8c" stroke-opacity=".5" stroke-width="1" stroke-dasharray="2 1"/><path d="M27.5 37.5H36" stroke="#8c8c8c" stroke-opacity=".5" stroke-width="1" stroke-dasharray="2 1"/><path d="M11.5 45V60" stroke="#8c8c8c" stroke-opacity=".5" stroke-width="1" stroke-dasharray="2 1"/><path d="M26.5 45V48.5" stroke="#8c8c8c" stroke-opacity=".5" stroke-width="1" stroke-dasharray="2 1"/><path d="M26.5 56.5V60" stroke="#8c8c8c" stroke-opacity=".5" stroke-width="1" stroke-dasharray="2 1"/><path d="M31.5 52.5H36" stroke="#8c8c8c" stroke-opacity=".5" stroke-width="1" stroke-dasharray="2 1"/><path d="M11.5 60V75" stroke="#8c8c8c" stroke-opacity=".5" stroke-width="1" stroke-dasharray="2 1"/><path d="M26.5 60V75" stroke="#8c8c8c" stroke-opacity=".5" stroke-width="1" stroke-dasharray="2 1"/><path d="M41.5 60V67.5" stroke="#8c8c8c" stroke-opacity=".5" stroke-width="1" stroke-dasharray="2 1"/><path d="M42.5 67.5H51" stroke="#8c8c8c" stroke-opacity=".5" stroke-width="1" stroke-dasharray="2 1"/><path d="M11.5 75V90" stroke="#8c8c8c" stroke-opacity=".5" stroke-width="1" stroke-dasharray="2 1"/><path d="M26.5 75V90" stroke="#8c8c8c" stroke-opacity=".5" stroke-width="1" stroke-dasharray="2 1"/><path d="M27.5 82.5H36" stroke="#8c8c8c" stroke-opacity=".5" stroke-width="1" stroke-dasharray="2 1"/><path d="M11.5 90V105" stroke="#8c8c8c" stroke-opacity=".5" stroke-width="1" stroke-dasharray="2 1"/><path d="M26.5 90V105" stroke="#8c8c8c" stroke-opacity=".5" stroke-width="1" stroke-dasharray="2 1"/><path d="M27.5 97.5H36" stroke="#8c8c8c" stroke-opacity=".5" stroke-width="1" stroke-dasharray="2 1"/><path d="M11.5 105V120" stroke="#8c8c8c" stroke-opacity=".5" stroke-width="1" stroke-dasharray="2 1"/><path d="M26.5 105V120" stroke="#8c8c8c" stroke-opacity=".5" stroke-width="1" stroke-dasharray="2 1"/><path d="M27.5 112.5H36" stroke="#8c8c8c" stroke-opacity=".5" stroke-width="1" stroke-dasharray="2 1"/><path d="M11.5 120V135" stroke="#8c8c8c" stroke-opacity=".5" stroke-width="1" stroke-dasharray="2 1"/><path d="M26.5 120V127.5" stroke="#8c8c8c" stroke-opacity=".5" stroke-width="1" stroke-dasharray="2 1"/><path d="M27.5 127.5H36" stroke="#8c8c8c" stroke-opacity=".5" stroke-width="1" stroke-dasharray="2 1"/><path d="M11.5 135V150" stroke="#8c8c8c" stroke-opacity=".5" stroke-width="1" stroke-dasharray="2 1"/><path d="M12.5 142.5H21" stroke="#8c8c8c" stroke-opacity=".5" stroke-width="1" stroke-dasharray="2 1"/><path d="M11.5 150V165" stroke="#8c8c8c" stroke-opacity=".5" stroke-width="1" stroke-dasharray="2 1"/><path d="M12.5 157.5H21" stroke="#8c8c8c" stroke-opacity=".5" stroke-width="1" stroke-dasharray="2 1"/><path d="M11.5 165V168.5" stroke="#8c8c8c" stroke-opacity=".5" stroke-width="1" stroke-dasharray="2 1"/><path d="M11.5 176.5V180" stroke="#8c8c8c" stroke-opacity=".5" stroke-width="1" stroke-dasharray="2 1"/><path d="M16.5 172.5H21" stroke="#8c8c8c" stroke-opacity=".5" stroke-width="1" stroke-dasharray="2 1"/><path d="M11.5 180V195" stroke="#8c8c8c" stroke-opacity=".5" stroke-width="1" stroke-dasharray="2 1"/><path d="M26.5 180V195" stroke="#8c8c8c" stroke-opacity=".5" stroke-width="1" stroke-dasharray="2 1"/><path d="M27.5 187.5H36" stroke="#8c8c8c" stroke-opacity=".5" stroke-width="1" stroke-dasharray="2 1"/><path d="M11.5 195V210" stroke="#8c8c8c" stroke-opacity=".5" stroke-width="1" stroke-dasharray="2 1"/><path d="M26.5 195V210" stroke="#8c8c8c" stroke-opacity=".5" stroke-width="1" stroke-dasharray="2 1"/><path d="M27.5 202.5H36" stroke="#8c8c8c" stroke-opacity=".5" stroke-width="1" stroke-dasharray="2 1"/><path d="M11.5 210V225" stroke="#8c8c8c" stroke-opacity=".5" stroke-width="1" stroke-dasharray="2 1"/><path d="M26.5 210V225" stroke="#8c8c8c" stroke-opacity=".5" stroke-width="1" stroke-dasharray="2 1"/><path d="M27.5 217.5H36" stroke="#8c8c8c" stroke-opacity=".5" stroke-width="1" stroke-dasharray="2 1"/><path d="M11.5 225V240" stroke="#8c8c8c" stroke-opacity=".5" stroke-width="1" stroke-dasharray="2 1"/><path d="M26.5 225V240" stroke="#8c8c8c" stroke-opacity=".5" stroke-width="1" stroke-dasharray="2 1"/><path d="M27.5 232.5H36" stroke="#8c8c8c" stroke-opacity=".5" stroke-width="1" stroke-dasharray="2 1"/><path d="M11.5 240V255" stroke="#8c8c8c" stroke-opacity=".5" stroke-width="1" stroke-dasharray="2 1"/><path d="M26.5 240V255" stroke="#8c8c8c" stroke-opacity=".5" stroke-width="1" stroke-dasharray="2 1"/><path d="M27.5 247.5H36" stroke="#8c8c8c" stroke-opacity=".5" stroke-width="1" stroke-dasharray="2 1"/><path d="M11.5 255V270" stroke="#8c8c8c" stroke-opacity=".5" stroke-width="1" stroke-dasharray="2 1"/><path d="M26.5 255V262.5" stroke="#8c8c8c" stroke-opacity=".5" stroke-width="1" stroke-dasharray="2 1"/><path d="M27.5 262.5H36" stroke="#8c8c8c" stroke-opacity=".5" stroke-width="1" stroke-dasharray="2 1"/><path d="M11.5 270V285" stroke="#8c8c8c" stroke-opacity=".5" stroke-width="1" stroke-dasharray="2 1"/><path d="M12.5 277.5H21" stroke="#8c8c8c" stroke-opacity=".5" stroke-width="1" stroke-dasharray="2 1"/><path d="M11.5 285V300" stroke="#8c8c8c" stroke-opacity=".5" stroke-width="1" stroke-dasharray="2 1"/><path d="M12.5 292.5H21" stroke="#8c8c8c" stroke-opacity=".5" stroke-width="1" stroke-dasharray="2 1"/><path d="M11.5 300V303.5" stroke="#8c8c8c" stroke-opacity=".5" stroke-width="1" stroke-dasharray="2 1"/><path d="M11.5 311.5V315" stroke="#8c8c8c" stroke-opacity=".5" stroke-width="1" stroke-dasharray="2 1"/><path d="M16.5 307.5H21" stroke="#8c8c8c" stroke-opacity=".5" stroke-width="1" stroke-dasharray="2 1"/><path d="M11.5 315V330" stroke="#8c8c8c" stroke-opacity=".5" stroke-width="1" stroke-dasharray="2 1"/><path d="M26.5 315V318.5" stroke="#8c8c8c" stroke-opacity=".5" stroke-width="1" stroke-dasharray="2 1"/><path d="M26.5 326.5V330" stroke="#8c8c8c" stroke-opacity=".5" stroke-width="1" stroke-dasharray="2 1"/><path d="M31.5 322.5H36" stroke="#8c8c8c" stroke-opacity=".5" stroke-width="1" stroke-dasharray="2 1"/><path d="M11.5 330V345" stroke="#8c8c8c" stroke-opacity=".5" stroke-width="1" stroke-dasharray="2 1"/><path d="M26.5 330V345" stroke="#8c8c8c" stroke-opacity=".5" stroke-width="1" stroke-dasharray="2 1"/><path d="M41.5 330V345" stroke="#8c8c8c" stroke-opacity=".5" stroke-width="1" stroke-dasharray="2 1"/><path d="M42.5 337.5H51" stroke="#8c8c8c" stroke-opacity=".5" stroke-width="1" stroke-dasharray="2 1"/><path d="M11.5 345V360" stroke="#8c8c8c" stroke-opacity=".5" stroke-width="1" stroke-dasharray="2 1"/><path d="M26.5 345V360" stroke="#8c8c8c" stroke-opacity=".5" stroke-width="1" stroke-dasharray="2 1"/><path d="M41.5 345V360" stroke="#8c8c8c" stroke-opacity=".5" stroke-width="1" stroke-dasharray="2 1"/><path d="M42.5 352.5H51" stroke="#8c8c8c" stroke-opacity=".5" stroke-width="1" stroke-dasharray="2 1"/><path d="M11.5 360V375" stroke="#8c8c8c" stroke-opacity=".5" stroke-width="1" stroke-dasharray="2 1"/><path d="M26.5 360V375" stroke="#8c8c8c" stroke-opacity=".5" stroke-width="1" stroke-dasharray="2 1"/><path d="M41.5 360V375" stroke="#8c8c8c" stroke-opacity=".5" stroke-width="1" stroke-dasharray="2 1"/><path d="M42.5 367.5H51" stroke="#8c8c8c" stroke-opacity=".5" stroke-width="1" stroke-dasharray="2 1"/><path d="M11.5 375V390" stroke="#8c8c8c" stroke-opacity=".5" stroke-width="1" stroke-dasharray="2 1"/><path d="M26.5 375V390" stroke="#8c8c8c" stroke-opacity=".5" stroke-width="1" stroke-dasharray="2 1"/><path d="M41.5 375V390" stroke="#8c8c8c" stroke-opacity=".5" stroke-width="1" stroke-dasharray="2 1"/><path d="M42.5 382.5H51" stroke="#8c8c8c" stroke-opacity=".5" stroke-width="1" stroke-dasharray="2 1"/><path d="M11.5 390V405" stroke="#8c8c8c" stroke-opacity=".5" stroke-width="1" stroke-dasharray="2 1"/><path d="M26.5 390V405" stroke="#8c8c8c" stroke-opacity=".5" stroke-width="1" stroke-dasharray="2 1"/><path d="M41.5 390V405" stroke="#8c8c8c" stroke-opacity=".5" stroke-width="1" stroke-dasharray="2 1"/><path d="M42.5 397.5H51" stroke="#8c8c8c" stroke-opacity=".5" stroke-width="1" stroke-dasharray="2 1"/><path d="M11.5 405V420" stroke="#8c8c8c" stroke-opacity=".5" stroke-width="1" stroke-dasharray="2 1"/><path d="M26.5 405V420" stroke="#8c8c8c" stroke-opacity=".5" stroke-width="1" stroke-dasharray="2 1"/><path d="M41.5 405V412.5" stroke="#8c8c8c" stroke-opacity=".5" stroke-width="1" stroke-dasharray="2 1"/><path d="M42.5 412.5H51" stroke="#8c8c8c" stroke-opacity=".5" stroke-width="1" stroke-dasharray="2 1"/><path d="M11.5 420V435" stroke="#8c8c8c" stroke-opacity=".5" stroke-width="1" stroke-dasharray="2 1"/><path d="M26.5 420V435" stroke="#8c8c8c" stroke-opacity=".5" stroke-width="1" stroke-dasharray="2 1"/><path d="M27.5 427.5H36" stroke="#8c8c8c" stroke-opacity=".5" stroke-width="1" stroke-dasharray="2 1"/><path d="M11.5 435V450" stroke="#8c8c8c" stroke-opacity=".5" stroke-width="1" stroke-dasharray="2 1"/><path d="M26.5 435V450" stroke="#8c8c8c" stroke-opacity=".5" stroke-width="1" stroke-dasharray="2 1"/><path d="M27.5 442.5H36" stroke="#8c8c8c" stroke-opacity=".5" stroke-width="1" stroke-dasharray="2 1"/><path d="M11.5 450V465" stroke="#8c8c8c" stroke-opacity=".5" stroke-width="1" stroke-dasharray="2 1"/><path d="M26.5 450V465" stroke="#8c8c8c" stroke-opacity=".5" stroke-width="1" stroke-dasharray="2 1"/><path d="M27.5 457.5H36" stroke="#8c8c8c" stroke-opacity=".5" stroke-width="1" stroke-dasharray="2 1"/><path d="M11.5 465V480" stroke="#8c8c8c" stroke-opacity=".5" stroke-width="1" stroke-dasharray="2 1"/><path d="M26.5 465V480" stroke="#8c8c8c" stroke-opacity=".5" stroke-width="1" stroke-dasharray="2 1"/><path d="M27.5 472.5H36" stroke="#8c8c8c" stroke-opacity=".5" stroke-width="1" stroke-dasharray="2 1"/><path d="M11.5 480V495" stroke="#8c8c8c" stroke-opacity=".5" stroke-width="1" stroke-dasharray="2 1"/><path d="M26.5 480V495" stroke="#8c8c8c" stroke-opacity=".5" stroke-width="1" stroke-dasharray="2 1"/><path d="M27.5 487.5H36" stroke="#8c8c8c" stroke-opacity=".5" stroke-width="1" stroke-dasharray="2 1"/><path d="M11.5 495V510" stroke="#8c8c8c" stroke-opacity=".5" stroke-width="1" stroke-dasharray="2 1"/><path d="M26.5 495V498.5" stroke="#8c8c8c" stroke-opacity=".5" stroke-width="1" stroke-dasharray="2 1"/><path d="M26.5 506.5V510" stroke="#8c8c8c" stroke-opacity=".5" stroke-width="1" stroke-dasharray="2 1"/><path d="M31.5 502.5H36" stroke="#8c8c8c" stroke-opacity=".5" stroke-width="1" stroke-dasharray="2 1"/><path d="M11.5 510V525" stroke="#8c8c8c" stroke-opacity=".5" stroke-width="1" stroke-dasharray="2 1"/><path d="M26.5 510V525" stroke="#8c8c8c" stroke-opacity=".5" stroke-width="1" stroke-dasharray="2 1"/><path d="M41.5 510V517.5" stroke="#8c8c8c" stroke-opacity=".5" stroke-width="1" stroke-dasharray="2 1"/><path d="M42.5 517.5H51" stroke="#8c8c8c" stroke-opacity=".5" stroke-width="1" stroke-dasharray="2 1"/><path d="M11.5 525V540" stroke="#8c8c8c" stroke-opacity=".5" stroke-width="1" stroke-dasharray="2 1"/><path d="M26.5 525V540" stroke="#8c8c8c" stroke-opacity=".5" stroke-width="1" stroke-dasharray="2 1"/><path d="M27.5 532.5H36" stroke="#8c8c8c" stroke-opacity=".5" stroke-width="1" stroke-dasharray="2 1"/><path d="M11.5 540V555" stroke="#8c8c8c" stroke-opacity=".5" stroke-width="1" stroke-dasharray="2 1"/><path d="M26.5 540V547.5" stroke="#8c8c8c" stroke-opacity=".5" stroke-width="1" stroke-dasharray="2 1"/><path d="M27.5 547.5H36" stroke="#8c8c8c" stroke-opacity=".5" stroke-width="1" stroke-dasharray="2 1"/><path d="M11.5 555V558.5" stroke="#8c8c8c" stroke-opacity=".5" stroke-width="1" stroke-dasharray="2 1"/><path d="M11.5 566.5V570" stroke="#8c8c8c" stroke-opacity=".5" stroke-width="1" stroke-dasharray="2 1"/><path d="M16.5 562.5H21" stroke="#8c8c8c" stroke-opacity=".5" stroke-width="1" stroke-dasharray="2 1"/><path d="M11.5 570V585" stroke="#8c8c8c" stroke-opacity=".5" stroke-width="1" stroke-dasharray="2 1"/><path d="M26.5 570V573.5" stroke="#8c8c8c" stroke-opacity=".5" stroke-width="1" stroke-dasharray="2 1"/><path d="M26.5 581.5V585" stroke="#8c8c8c" stroke-opacity=".5" stroke-width="1" stroke-dasharray="2 1"/><path d="M31.5 577.5H36" stroke="#8c8c8c" stroke-opacity=".5" stroke-width="1" stroke-dasharray="2 1"/><path d="M11.5 585V600" stroke="#8c8c8c" stroke-opacity=".5" stroke-width="1" stroke-dasharray="2 1"/><path d="M26.5 585V600" stroke="#8c8c8c" stroke-opacity=".5" stroke-width="1" stroke-dasharray="2 1"/><path d="M41.5 585V600" stroke="#8c8c8c" stroke-opacity=".5" stroke-width="1" stroke-dasharray="2 1"/><path d="M42.5 592.5H51" stroke="#8c8c8c" stroke-opacity=".5" stroke-width="1" stroke-dasharray="2 1"/><path d="M11.5 600V615" stroke="#8c8c8c" stroke-opacity=".5" stroke-width="1" stroke-dasharray="2 1"/><path d="M26.5 600V615" stroke="#8c8c8c" stroke-opacity=".5" stroke-width="1" stroke-dasharray="2 1"/><path d="M41.5 600V607.5" stroke="#8c8c8c" stroke-opacity=".5" stroke-width="1" stroke-dasharray="2 1"/><path d="M42.5 607.5H51" stroke="#8c8c8c" stroke-opacity=".5" stroke-width="1" stroke-dasharray="2 1"/><path d="M11.5 615V630" stroke="#8c8c8c" stroke-opacity=".5" stroke-width="1" stroke-dasharray="2 1"/><path d="M26.5 615V618.5" stroke="#8c8c8c" stroke-opacity=".5" stroke-width="1" stroke-dasharray="2 1"/><path d="M26.5 626.5V630" stroke="#8c8c8c" stroke-opacity=".5" stroke-width="1" stroke-dasharray="2 1"/><path d="M31.5 622.5H36" stroke="#8c8c8c" stroke-opacity=".5" stroke-width="1" stroke-dasharray="2 1"/><path d="M11.5 630V645" stroke="#8c8c8c" stroke-opacity=".5" stroke-width="1" stroke-dasharray="2 1"/><path d="M26.5 630V645" stroke="#8c8c8c" stroke-opacity=".5" stroke-width="1" stroke-dasharray="2 1"/><path d="M41.5 630V645" stroke="#8c8c8c" stroke-opacity=".5" stroke-width="1" stroke-dasharray="2 1"/><path d="M42.5 637.5H51" stroke="#8c8c8c" stroke-opacity=".5" stroke-width="1" stroke-dasharray="2 1"/><path d="M11.5 645V660" stroke="#8c8c8c" stroke-opacity=".5" stroke-width="1" stroke-dasharray="2 1"/><path d="M26.5 645V660" stroke="#8c8c8c" stroke-opacity=".5" stroke-width="1" stroke-dasharray="2 1"/><path d="M41.5 645V652.5" stroke="#8c8c8c" stroke-opacity=".5" stroke-width="1" stroke-dasharray="2 1"/><path d="M42.5 652.5H51" stroke="#8c8c8c" stroke-opacity=".5" stroke-width="1" stroke-dasharray="2 1"/><path d="M11.5 660V675" stroke="#8c8c8c" stroke-opacity=".5" stroke-width="1" stroke-dasharray="2 1"/><path d="M26.5 660V663.5" stroke="#8c8c8c" stroke-opacity=".5" stroke-width="1" stroke-dasharray="2 1"/><path d="M26.5 671.5V675" stroke="#8c8c8c" stroke-opacity=".5" stroke-width="1" stroke-dasharray="2 1"/><path d="M31.5 667.5H36" stroke="#8c8c8c" stroke-opacity=".5" stroke-width="1" stroke-dasharray="2 1"/><path d="M11.5 675V690" stroke="#8c8c8c" stroke-opacity=".5" stroke-width="1" stroke-dasharray="2 1"/><path d="M26.5 675V690" stroke="#8c8c8c" stroke-opacity=".5" stroke-width="1" stroke-dasharray="2 1"/><path d="M41.5 675V690" stroke="#8c8c8c" stroke-opacity=".5" stroke-width="1" stroke-dasharray="2 1"/><path d="M42.5 682.5H51" stroke="#8c8c8c" stroke-opacity=".5" stroke-width="1" stroke-dasharray="2 1"/><path d="M11.5 690V705" stroke="#8c8c8c" stroke-opacity=".5" stroke-width="1" stroke-dasharray="2 1"/><path d="M26.5 690V705" stroke="#8c8c8c" stroke-opacity=".5" stroke-width="1" stroke-dasharray="2 1"/><path d="M41.5 690V697.5" stroke="#8c8c8c" stroke-opacity=".5" stroke-width="1" stroke-dasharray="2 1"/><path d="M42.5 697.5H51" stroke="#8c8c8c" stroke-opacity=".5" stroke-width="1" stroke-dasharray="2 1"/><path d="M11.5 705V720" stroke="#8c8c8c" stroke-opacity=".5" stroke-width="1" stroke-dasharray="2 1"/><path d="M26.5 705V708.5" stroke="#8c8c8c" stroke-opacity=".5" stroke-width="1" stroke-dasharray="2 1"/><path d="M31.5 712.5H36" stroke="#8c8c8c" stroke-opacity=".5" stroke-width="1" stroke-dasharray="2 1"/><path d="M11.5 720V735" stroke="#8c8c8c" stroke-opacity=".5" stroke-width="1" stroke-dasharray="2 1"/><path d="M41.5 720V735" stroke="#8c8c8c" stroke-opacity=".5" stroke-width="1" stroke-dasharray="2 1"/><path d="M42.5 727.5H51" stroke="#8c8c8c" stroke-opacity=".5" stroke-width="1" stroke-dasharray="2 1"/><path d="M11.5 735V750" stroke="#8c8c8c" stroke-opacity=".5" stroke-width="1" stroke-dasharray="2 1"/><path d="M41.5 735V742.5" stroke="#8c8c8c" stroke-opacity=".5" stroke-width="1" stroke-dasharray="2 1"/><path d="M42.5 742.5H51" stroke="#8c8c8c" stroke-opacity=".5" stroke-width="1" stroke-dasharray="2 1"/><path d="M11.5 750V765" stroke="#8c8c8c" stroke-opacity=".5" stroke-width="1" stroke-dasharray="2 1"/><path d="M12.5 757.5H21" stroke="#8c8c8c" stroke-opacity=".5" stroke-width="1" stroke-dasharray="2 1"/><path d="M11.5 765V780" stroke="#8c8c8c" stroke-opacity=".5" stroke-width="1" stroke-dasharray="2 1"/><path d="M12.5 772.5H21" stroke="#8c8c8c" stroke-opacity=".5" stroke-width="1" stroke-dasharray="2 1"/><path d="M11.5 780V795" stroke="#8c8c8c" stroke-opacity=".5" stroke-width="1" stroke-dasharray="2 1"/><path d="M12.5 787.5H21" stroke="#8c8c8c" stroke-opacity=".5" stroke-width="1" stroke-dasharray="2 1"/><path d="M11.5 795V810" stroke="#8c8c8c" stroke-opacity=".5" stroke-width="1" stroke-dasharray="2 1"/><path d="M12.5 802.5H21" stroke="#8c8c8c" stroke-opacity=".5" stroke-width="1" stroke-dasharray="2 1"/><path d="M11.5 810V825" stroke="#8c8c8c" stroke-opacity=".5" stroke-width="1" stroke-dasharray="2 1"/><path d="M12.5 817.5H21" stroke="#8c8c8c" stroke-opacity=".5" stroke-width="1" stroke-dasharray="2 1"/><path d="M11.5 825V828.5" stroke="#8c8c8c" stroke-opacity=".5" stroke-width="1" stroke-dasharray="2 1"/><path d="M11.5 836.5V840" stroke="#8c8c8c" stroke-opacity=".5" stroke-width="1" stroke-dasharray="2 1"/><path d="M16.5 832.5H21" stroke="#8c8c8c" stroke-opacity=".5" stroke-width="1" stroke-dasharray="2 1"/><path d="M11.5 840V855" stroke="#8c8c8c" stroke-opacity=".5" stroke-width="1" stroke-dasharray="2 1"/><path d="M26.5 840V847.5" stroke="#8c8c8c" stroke-opacity=".5" stroke-width="1" stroke-dasharray="2 1"/><path d="M27.5 847.5H36" stroke="#8c8c8c" stroke-opacity=".5" stroke-width="1" stroke-dasharray="2 1"/><path d="M11.5 855V870" stroke="#8c8c8c" stroke-opacity=".5" stroke-width="1" stroke-dasharray="2 1"/><path d="M12.5 862.5H21" stroke="#8c8c8c" stroke-opacity=".5" stroke-width="1" stroke-dasharray="2 1"/><path d="M11.5 870V885" stroke="#8c8c8c" stroke-opacity=".5" stroke-width="1" stroke-dasharray="2 1"/><path d="M12.5 877.5H21" stroke="#8c8c8c" stroke-opacity=".5" stroke-width="1" stroke-dasharray="2 1"/><path d="M11.5 885V888.5" stroke="#8c8c8c" stroke-opacity=".5" stroke-width="1" stroke-dasharray="2 1"/><path d="M11.5 896.5V900" stroke="#8c8c8c" stroke-opacity=".5" stroke-width="1" stroke-dasharray="2 1"/><path d="M16.5 892.5H21" stroke="#8c8c8c" stroke-opacity=".5" stroke-width="1" stroke-dasharray="2 1"/><path d="M11.5 900V915" stroke="#8c8c8c" stroke-opacity=".5" stroke-width="1" stroke-dasharray="2 1"/><path d="M26.5 900V907.5" stroke="#8c8c8c" stroke-opacity=".5" stroke-width="1" stroke-dasharray="2 1"/><path d="M27.5 907.5H36" stroke="#8c8c8c" stroke-opacity=".5" stroke-width="1" stroke-dasharray="2 1"/></svg>
<svg class="a" style="left:9px;top:20.5px" width="7" height="7" viewBox="0 0 7 7"><rect x=".4" y=".4" width="6.200" height="6.200" rx=".8" fill="#fcfcfd" stroke="#9c9ca4" stroke-width=".9"/><path d="M1.800 3.500h3.400" stroke="#4a5a9a" stroke-width=".9"/></svg>
<svg class="a" style="left:24px;top:65.5px" width="7" height="7" viewBox="0 0 7 7"><rect x=".4" y=".4" width="6.200" height="6.200" rx=".8" fill="#fcfcfd" stroke="#9c9ca4" stroke-width=".9"/><path d="M1.800 3.500h3.400" stroke="#4a5a9a" stroke-width=".9"/></svg>
<svg class="a" style="left:9px;top:185.5px" width="7" height="7" viewBox="0 0 7 7"><rect x=".4" y=".4" width="6.200" height="6.200" rx=".8" fill="#fcfcfd" stroke="#9c9ca4" stroke-width=".9"/><path d="M1.800 3.500h3.400" stroke="#4a5a9a" stroke-width=".9"/></svg>
<svg class="a" style="left:9px;top:320.5px" width="7" height="7" viewBox="0 0 7 7"><rect x=".4" y=".4" width="6.200" height="6.200" rx=".8" fill="#fcfcfd" stroke="#9c9ca4" stroke-width=".9"/><path d="M1.800 3.500h3.400" stroke="#4a5a9a" stroke-width=".9"/></svg>
<svg class="a" style="left:24px;top:335.5px" width="7" height="7" viewBox="0 0 7 7"><rect x=".4" y=".4" width="6.200" height="6.200" rx=".8" fill="#fcfcfd" stroke="#9c9ca4" stroke-width=".9"/><path d="M1.800 3.500h3.400" stroke="#4a5a9a" stroke-width=".9"/></svg>
<svg class="a" style="left:24px;top:515.5px" width="7" height="7" viewBox="0 0 7 7"><rect x=".4" y=".4" width="6.200" height="6.200" rx=".8" fill="#fcfcfd" stroke="#9c9ca4" stroke-width=".9"/><path d="M1.800 3.500h3.400" stroke="#4a5a9a" stroke-width=".9"/></svg>
<svg class="a" style="left:9px;top:575.5px" width="7" height="7" viewBox="0 0 7 7"><rect x=".4" y=".4" width="6.200" height="6.200" rx=".8" fill="#fcfcfd" stroke="#9c9ca4" stroke-width=".9"/><path d="M1.800 3.500h3.400" stroke="#4a5a9a" stroke-width=".9"/></svg>
<svg class="a" style="left:24px;top:590.5px" width="7" height="7" viewBox="0 0 7 7"><rect x=".4" y=".4" width="6.200" height="6.200" rx=".8" fill="#fcfcfd" stroke="#9c9ca4" stroke-width=".9"/><path d="M1.800 3.500h3.400" stroke="#4a5a9a" stroke-width=".9"/></svg>
<svg class="a" style="left:24px;top:635.5px" width="7" height="7" viewBox="0 0 7 7"><rect x=".4" y=".4" width="6.200" height="6.200" rx=".8" fill="#fcfcfd" stroke="#9c9ca4" stroke-width=".9"/><path d="M1.800 3.500h3.400" stroke="#4a5a9a" stroke-width=".9"/></svg>
<svg class="a" style="left:24px;top:680.5px" width="7" height="7" viewBox="0 0 7 7"><rect x=".4" y=".4" width="6.200" height="6.200" rx=".8" fill="#fcfcfd" stroke="#9c9ca4" stroke-width=".9"/><path d="M1.800 3.500h3.400" stroke="#4a5a9a" stroke-width=".9"/></svg>
<svg class="a" style="left:24px;top:725.5px" width="7" height="7" viewBox="0 0 7 7"><rect x=".4" y=".4" width="6.200" height="6.200" rx=".8" fill="#fcfcfd" stroke="#9c9ca4" stroke-width=".9"/><path d="M1.800 3.500h3.400" stroke="#4a5a9a" stroke-width=".9"/></svg>
<svg class="a" style="left:9px;top:845.5px" width="7" height="7" viewBox="0 0 7 7"><rect x=".4" y=".4" width="6.200" height="6.200" rx=".8" fill="#fcfcfd" stroke="#9c9ca4" stroke-width=".9"/><path d="M1.800 3.500h3.400" stroke="#4a5a9a" stroke-width=".9"/></svg>
<svg class="a" style="left:9px;top:905.5px" width="7" height="7" viewBox="0 0 7 7"><rect x=".4" y=".4" width="6.200" height="6.200" rx=".8" fill="#fcfcfd" stroke="#9c9ca4" stroke-width=".9"/><path d="M1.800 3.500h3.400" stroke="#4a5a9a" stroke-width=".9"/></svg>
<div class="a" style="left:1102px;top:17px;width:12.500px;height:928px;background:#f0f0f0"></div>
<div class="a" style="left:1103px;top:30px;width:12px;height:30px;background:#cdcdcd"></div>
<svg class="a" style="left:1105px;top:21px" width="8" height="6" viewBox="0 0 8 6"><path d="M1 4.500l3-3 3 3" fill="none" stroke="#505050" stroke-width="1.100"/></svg>
<svg class="a" style="left:1105px;top:917px" width="8" height="6" viewBox="0 0 8 6"><path d="M1 1.500l3 3 3-3" fill="none" stroke="#505050" stroke-width="1.100"/></svg>
</div>
<div class="a" style="left:795px;top:1010px;width:1120px;height:18px;background:#f0f0f0"></div>
<div class="a" style="left:795px;top:1009px;width:37px;height:17px;background:#fff"></div>
<div class="t" style="left:800.5px;top:1011.5px;font-size:9px;letter-spacing:-0.1px;">View</div>
<div class="a" style="left:832px;top:1010.5px;width:81px;height:15px;border:1px solid #e2e2e2;border-top:0;background:#f0f0f0"></div>
<div class="t" style="left:836.5px;top:1010.5px;font-size:9px;letter-spacing:-0.1px;letter-spacing:-0.3px">Referenced By (23)</div>
<div class="a" style="left:913px;top:1010.5px;width:48.5px;height:15px;border:1px solid #e2e2e2;border-top:0;background:#f0f0f0"></div>
<div class="t" style="left:917.5px;top:1010.5px;font-size:9px;letter-spacing:-0.1px;letter-spacing:-0.18px">Messages</div>
<div class="a" style="left:961.5px;top:1010.5px;width:56.0px;height:15px;border:1px solid #e2e2e2;border-top:0;background:#f0f0f0"></div>
<div class="t" style="left:966.0px;top:1010.5px;font-size:9px;letter-spacing:-0.1px;letter-spacing:0.18px">Information</div>
<div class="a" style="left:1017.5px;top:1010.5px;width:55.0px;height:15px;border:1px solid #e2e2e2;border-top:0;background:#f0f0f0"></div>
<div class="t" style="left:1022.0px;top:1010.5px;font-size:9px;letter-spacing:-0.1px;">What's New</div>
<div class="a" style="left:1383.5px;top:69.5px;width:323.8px;height:45.3px;border:3.9px solid #e81c24"></div>
<div class="a" style="left:19.7px;top:769.6px;width:579px;height:30.2px;border:3.4px solid #e81c24"></div>
<div class="a" style="left:548.4px;top:736.7px;height:40px;line-height:40px;font-family:'DejaVu Sans','Liberation Sans',sans-serif;font-size:29.4px;color:#e81c24;white-space:nowrap;letter-spacing:0.05px">Нашли Кюри</div>
<div class="a" style="left:0;top:1050px;width:1920px;height:30px;background:#0a2031"></div>
<div class="a" style="left:148px;top:1050px;width:36.500px;height:30px;background:#064b85"></div>
<div class="a" style="left:41.5px;top:1077.700px;width:29.5px;height:2.300px;background:#9ccbf2"></div>
<div class="a" style="left:78px;top:1077.700px;width:30px;height:2.300px;background:#9ccbf2"></div>
<div class="a" style="left:115px;top:1077.700px;width:30px;height:2.300px;background:#9ccbf2"></div>
<div class="a" style="left:148px;top:1077.700px;width:36.5px;height:2.300px;background:#9ccbf2"></div>
<svg class="a" style="left:11.700px;top:1058.800px" width="12.300" height="12.300" viewBox="0 0 13 13" fill="#fff"><path d="M0 1.800l5.300-.8v5.200H0zM6 .9L13 0v6.200H6zM0 6.900h5.300v5.200L0 11.300zM6 6.900h7V13l-7-1z"/></svg>
<svg class="a" style="left:46.400px;top:1055.400px" width="19.500" height="19.500" viewBox="0 0 20 20" fill="none" stroke="#e0244f" stroke-width="1.350"><circle cx="10" cy="10" r="8.500"/><ellipse cx="10" cy="10" rx="4.300" ry="7.300"/></svg>
<svg class="a" style="left:84.700px;top:1057.600px" width="16.500" height="13.800" viewBox="0 0 18 15"><path d="M0 1h6l1.500 1.500H17V14H0z" fill="#e8a92a"/><path d="M0 3.500h17.500V14H0z" fill="#fbd25a"/><rect x="4" y="8.500" width="9.500" height="5.500" fill="#2f8fe0"/><rect x="6.300" y="11" width="5" height="3" fill="#fbd25a"/></svg>
<svg class="a" style="left:120.900px;top:1056.400px" width="17" height="17" viewBox="0 0 18 18"><circle cx="9" cy="9" r="8.800" fill="#fff"/><path d="M4.800 4.800L9 10v5M13.200 4.800L9 10" fill="none" stroke="#e8282a" stroke-width="1.900"/></svg>
<svg class="a" style="left:157.400px;top:1055.800px" width="18" height="18" viewBox="0 0 18 18"><circle cx="9" cy="9" r="8.800" fill="#77766c"/><circle cx="9" cy="9" r="8" fill="#b3bfc9"/><path d="M4.600 3.600l1.600.2.500 4.200-.3 5.200-2-.2-.4-4z" fill="#e01f26"/><path d="M11.300 3.800l1.700-.6 1.700 4.200-1.400 1-2.300-1.800z" fill="#e01f26"/><path d="M4.300 3.300l1-.9.900 1-.8.800zM12 2.900l1-.8.800 1.100-1 .7z" fill="#1c1c1c"/><path d="M2.500 6.200c.5-1.400 1.200-2 1.800-1.700l.2 3.800-1.500.8c-.6-.8-.8-1.800-.5-2.900z" fill="#ecd3a4"/><path d="M5.200 8.200h8l.6 4.800-2 .8-.8-2.200H8.600l-.3 2.600-2.600-.4z" fill="#3f6db3"/><path d="M7.400 2.400c1-.9 2.500-.9 3.300 0l.3 2.600-.9 1.300H8.300l-.9-1.300z" fill="#f2dcae"/><path d="M7.200 2.900c.6-1.300 2.800-1.600 3.800-.2l-.6.700c-.9-.6-1.900-.5-2.700.1z" fill="#e6cf4a"/><path d="M8.300 6.200h1.500l.2 6.800-.9.900-1-.9z" fill="#ecd96a"/></svg>
<svg class="a" style="left:1755px;top:1060px" width="11" height="8" viewBox="0 0 11 8"><path d="M1 6.500L5.500 2 10 6.500" fill="none" stroke="#fff" stroke-width="1.100"/></svg>
<svg class="a" style="left:1771px;top:1059px" width="15" height="12" viewBox="0 0 15 12" fill="none" stroke="#fff" stroke-width=".9"><rect x="4" y="1" width="9.500" height="6.500"/><path d="M6 10.500h5.500M8.700 7.500v3"/><rect x=".8" y="1.800" width="2.700" height="2.200"/><path d="M2.200 4v5.300h3.500"/></svg>
<svg class="a" style="left:1789px;top:1059px" width="15" height="12" viewBox="0 0 15 12" fill="none" stroke="#fff" stroke-width=".9"><path d="M1 4.300h2.200L6 1.500v9L3.200 7.700H1z"/><path d="M8 4.300c.8.900.8 2.500 0 3.400"/><path d="M9.800 3c1.500 1.700 1.500 4.300 0 6" stroke-opacity=".6"/><path d="M11.600 1.800c2 2.400 2 6 0 8.400" stroke-opacity=".35"/></svg>
<div class="t" style="left:1809.7px;top:1057.5px;color:#fff;font-size:8.3px">ENG</div>
<div class="t" style="left:1826.5px;top:1050.5px;width:60px;text-align:center;color:#fff;font-size:8.6px">1:57 PM</div>
<div class="t" style="left:1826.5px;top:1064.2px;width:60px;text-align:center;color:#fff;font-size:8.6px">12/27/2023</div>
<svg class="a" style="left:1888px;top:1058px" width="14" height="14" viewBox="0 0 14 14" fill="none" stroke="#fff" stroke-width="1"><path d="M1 1.500h12v8.500H9L7 12 5 10H1z"/></svg>
<div class="a" style="left:1916.500px;top:1050px;width:1px;height:30px;background:#5a6a78"></div>
</body></html>
